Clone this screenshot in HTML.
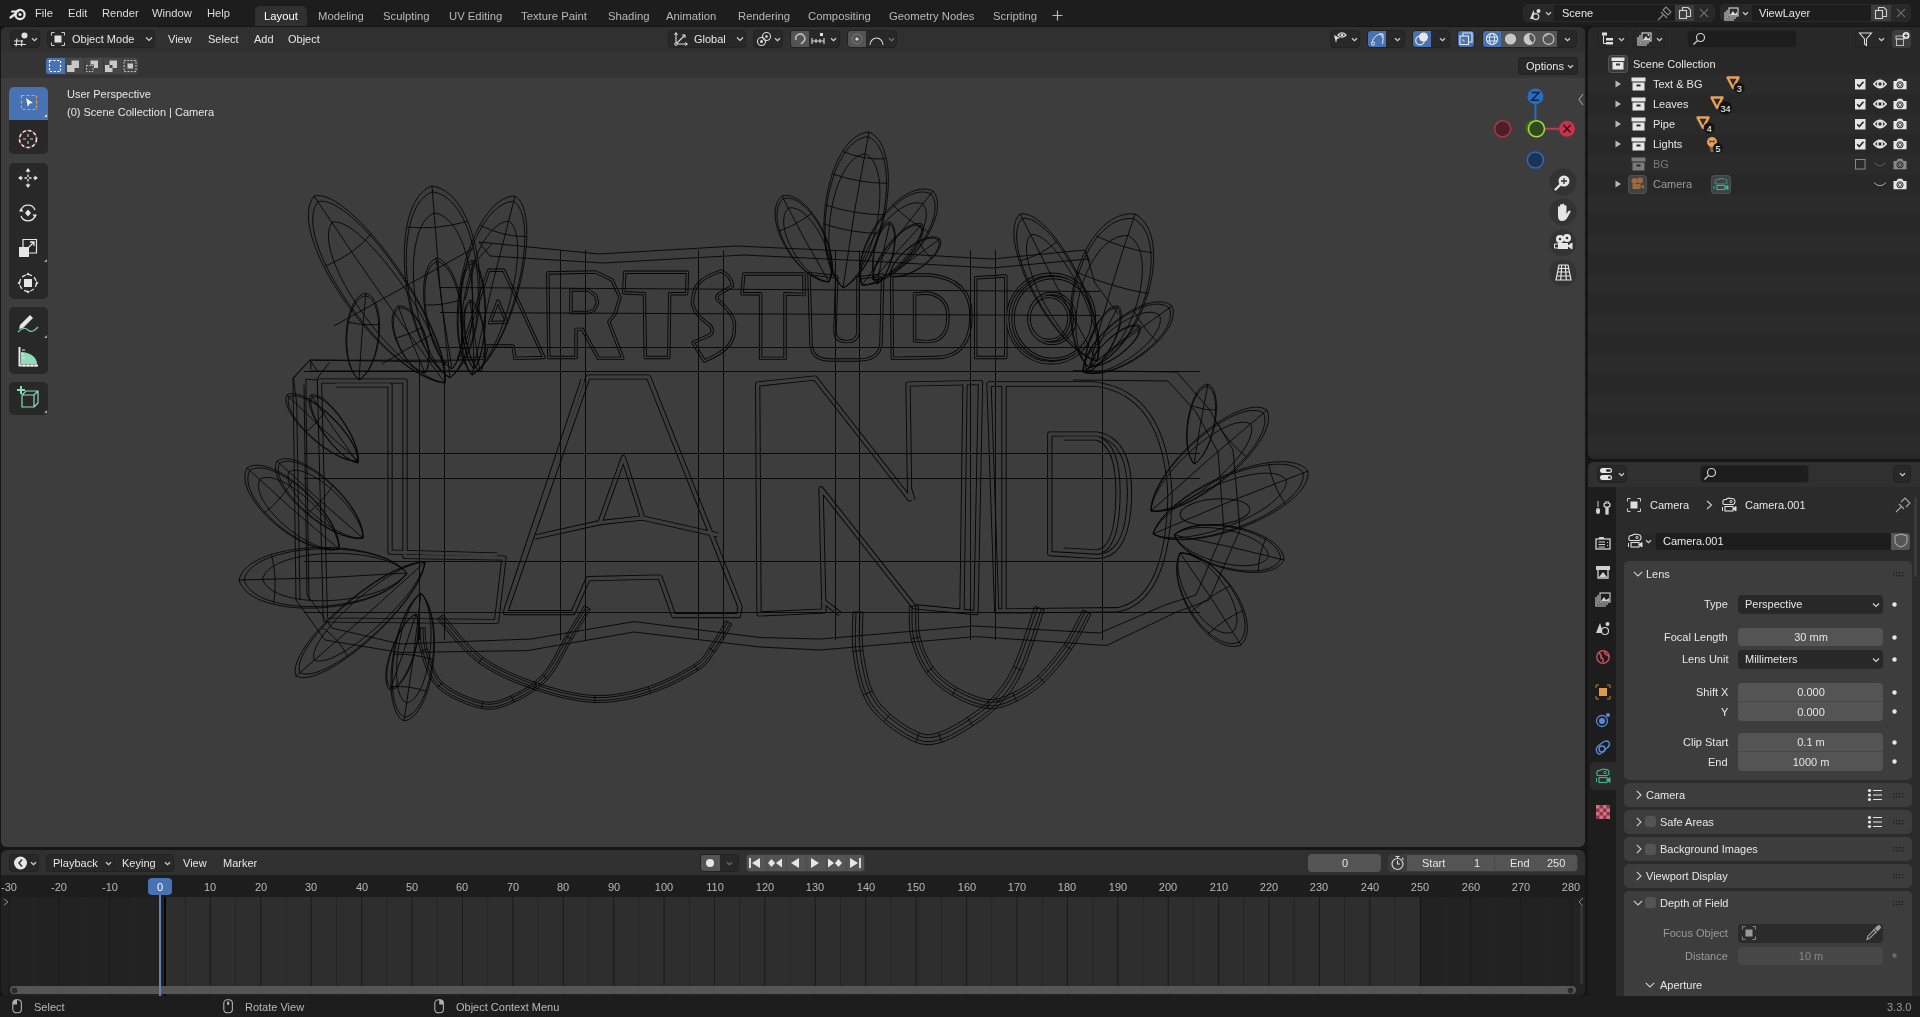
<!DOCTYPE html>
<html><head><meta charset="utf-8">
<style>
*{box-sizing:border-box;margin:0;padding:0}
html,body{width:1920px;height:1017px;overflow:hidden;background:#161616;font-family:"Liberation Sans",sans-serif;font-size:11px;color:#e6e6e6}
.a{position:absolute}
.t{position:absolute;white-space:nowrap;-webkit-font-smoothing:antialiased;will-change:transform}
svg{overflow:visible}
</style></head><body>

<div class="a" style="left:0px;top:0px;width:1920px;height:26px;background:#1d1d1d;border-radius:0px;"></div>
<div class="a" style="left:1px;top:27px;width:1584px;height:820px;background:#3d3d3d;border-radius:6px;"></div>
<div class="a" style="left:1px;top:27px;width:1584px;height:25px;background:#303030;border-radius:0px;border-radius:6px 6px 0 0"></div>
<div class="a" style="left:1px;top:52px;width:1584px;height:26px;background:#343434;border-radius:0px;"></div>
<div class="a" style="left:1588px;top:27px;width:332px;height:432px;background:#282828;border-radius:0px;border-radius:6px 0 0 6px"></div>
<div class="a" style="left:1588px;top:462px;width:332px;height:534px;background:#2b2b2b;border-radius:0px;border-radius:6px 0 0 6px"></div>
<div class="a" style="left:1588px;top:462px;width:332px;height:25px;background:#303030;border-radius:0px;border-radius:6px 0 0 0"></div>
<div class="a" style="left:1588px;top:487px;width:28px;height:509px;background:#1d1d1d;border-radius:0px;border-radius:0 0 0 6px"></div>
<div class="a" style="left:1px;top:850px;width:1584px;height:146px;background:#1d1d1d;border-radius:6px;"></div>
<div class="a" style="left:1px;top:850px;width:1584px;height:25px;background:#303030;border-radius:0px;border-radius:6px 6px 0 0"></div>
<div class="a" style="left:0px;top:996px;width:1920px;height:21px;background:#1d1d1d;border-radius:0px;"></div>
<svg class="a" style="left:0;top:0" width="1586" height="847" viewBox="0 0 1586 847"><g fill="none" stroke="#050505" stroke-width="3.4" stroke-linejoin="round"><path d="M488.8 270.3 L503.8 270.3 L544.0 357.5 L515.0 358.4 L513.0 346.0 L487.0 346.0 L484.0 358.4 L458.8 358.4 Z"/><path d="M498.0 301.0 L506.6 322.0 L489.7 322.8 Z"/><path d="M547.8 273.0 L595.6 272.0 L612.0 280.0 L620.0 297.5 L615.0 314.0 L608.8 322.0 L622.8 358.4 L598.4 358.4 L582.5 329.4 L576.0 329.4 L576.0 357.5 L548.8 357.5 Z"/><path d="M571.0 290.0 L588.0 290.0 L596.0 296.0 L597.5 303.0 L594.0 310.0 L588.0 312.5 L571.0 312.5 Z"/><path d="M624.7 272.2 L687.5 272.2 L686.6 293.8 L669.7 293.8 L668.8 357.5 L645.3 357.5 L644.4 293.8 L623.8 292.8 Z"/><path d="M721 271 C728 274 732 280 732.5 286 L719.4 293.8 C716 296 716 300 719.4 301 C728 310 736 318 734.4 327.5 C735 340 730 350 704.4 361 L693 342.5 L710 335 C714 332 712 326 708 323.8 C700 318 690 308 693 297.5 C694 286 700 278 721 271 Z"/><path d="M743.8 274.0 L804.0 274.0 L804.0 294.6 L785.0 293.8 L785.0 358.4 L760.6 358.4 L760.6 293.8 L742.0 293.8 Z"/><path d="M809 273.4 L836.7 277 L835 331 Q835 341.6 847 341.6 Q858 341.6 858 331 L858 278 L882.7 275 L881 343 Q880 360 858 360 L831 360 Q811 360 811 343 Z"/><path d="M891.6 275 L930.5 275 Q971 280 971 315 Q971 357.5 935.8 357.5 L892.4 358.4 Z M914.6 294 L927 293 Q948 296 948 316.8 Q948 341.6 927 341.6 L914.6 340.7 Z"/><path d="M975.7 277.8 L1005.8 276.0 L1005.8 357.5 L975.7 357.5 Z"/><ellipse cx="1051" cy="318.5" rx="43.4" ry="44.3" transform="rotate(0 1051 318.5)"/><ellipse cx="1049" cy="318.5" rx="20" ry="22" transform="rotate(0 1049 318.5)"/><ellipse cx="1053" cy="318.5" rx="40" ry="41" transform="rotate(0 1053 318.5)"/><ellipse cx="1052" cy="318.5" rx="23" ry="25" transform="rotate(0 1052 318.5)"/></g><g fill="none" stroke="#3d3d3d" stroke-width="1.6" stroke-linejoin="round"><path d="M488.8 270.3 L503.8 270.3 L544.0 357.5 L515.0 358.4 L513.0 346.0 L487.0 346.0 L484.0 358.4 L458.8 358.4 Z"/><path d="M498.0 301.0 L506.6 322.0 L489.7 322.8 Z"/><path d="M547.8 273.0 L595.6 272.0 L612.0 280.0 L620.0 297.5 L615.0 314.0 L608.8 322.0 L622.8 358.4 L598.4 358.4 L582.5 329.4 L576.0 329.4 L576.0 357.5 L548.8 357.5 Z"/><path d="M571.0 290.0 L588.0 290.0 L596.0 296.0 L597.5 303.0 L594.0 310.0 L588.0 312.5 L571.0 312.5 Z"/><path d="M624.7 272.2 L687.5 272.2 L686.6 293.8 L669.7 293.8 L668.8 357.5 L645.3 357.5 L644.4 293.8 L623.8 292.8 Z"/><path d="M721 271 C728 274 732 280 732.5 286 L719.4 293.8 C716 296 716 300 719.4 301 C728 310 736 318 734.4 327.5 C735 340 730 350 704.4 361 L693 342.5 L710 335 C714 332 712 326 708 323.8 C700 318 690 308 693 297.5 C694 286 700 278 721 271 Z"/><path d="M743.8 274.0 L804.0 274.0 L804.0 294.6 L785.0 293.8 L785.0 358.4 L760.6 358.4 L760.6 293.8 L742.0 293.8 Z"/><path d="M809 273.4 L836.7 277 L835 331 Q835 341.6 847 341.6 Q858 341.6 858 331 L858 278 L882.7 275 L881 343 Q880 360 858 360 L831 360 Q811 360 811 343 Z"/><path d="M891.6 275 L930.5 275 Q971 280 971 315 Q971 357.5 935.8 357.5 L892.4 358.4 Z M914.6 294 L927 293 Q948 296 948 316.8 Q948 341.6 927 341.6 L914.6 340.7 Z"/><path d="M975.7 277.8 L1005.8 276.0 L1005.8 357.5 L975.7 357.5 Z"/><ellipse cx="1051" cy="318.5" rx="43.4" ry="44.3" transform="rotate(0 1051 318.5)"/><ellipse cx="1049" cy="318.5" rx="20" ry="22" transform="rotate(0 1049 318.5)"/><ellipse cx="1053" cy="318.5" rx="40" ry="41" transform="rotate(0 1053 318.5)"/><ellipse cx="1052" cy="318.5" rx="23" ry="25" transform="rotate(0 1052 318.5)"/></g><g fill="none" stroke="#050505" stroke-width="5.2" stroke-linejoin="round"><path d="M319.5 381.0 L405.0 381.0 L405.0 556.5 L504.0 558.0 L496.5 621.5 L325.4 620.0 Z"/><path d="M336.0 385.0 L390.0 385.0 L390.0 552.0 L497.0 555.0"/><path d="M588.0 377.0 L648.5 377.0 L740.0 606.7 L738.5 615.6 L673.6 615.6 L660.0 577.0 L588.0 578.7 L573.0 612.6 L505.4 612.6 Z"/><path d="M623.4 457.7 L642.6 518.0 L600.0 522.6 Z"/><path d="M583.0 380.0 L506.0 610.0"/><path d="M600.0 522.6 L535.0 537.0"/><path d="M642.6 518.0 L718.0 535.0"/><path d="M757.7 384.0 L815.0 378.0 L909.7 499.0 L908.0 384.0 L980.5 382.5 L976.0 612.6 L914.0 606.7 L821.0 488.7 L824.0 611.0 L759.0 614.0 Z"/><path d="M910.0 490.0 L913.0 500.0"/><path d="M965.0 384.0 L962.0 610.0"/><path d="M840.0 614.0 L822.0 600.0"/><path d="M989.0 384.0 L1094.0 384.0"/><path d="M989 384 L1094 384 Q1165 392 1170 495 Q1168 600 1117.7 609.7 L996.7 611 Z"/><path d="M1049.8 434 L1097 434 Q1129.5 440 1129.5 491.6 Q1129.5 556 1097 556.5 L1049.8 553.6 Z"/><path d="M1064 438 L1097 438 Q1118 445 1118 491.6 Q1118 550 1097 552 L1064 550"/><path d="M1004.0 384.0 L1004.0 611.0"/></g><g fill="none" stroke="#3d3d3d" stroke-width="3.4" stroke-linejoin="round"><path d="M319.5 381.0 L405.0 381.0 L405.0 556.5 L504.0 558.0 L496.5 621.5 L325.4 620.0 Z"/><path d="M336.0 385.0 L390.0 385.0 L390.0 552.0 L497.0 555.0"/><path d="M588.0 377.0 L648.5 377.0 L740.0 606.7 L738.5 615.6 L673.6 615.6 L660.0 577.0 L588.0 578.7 L573.0 612.6 L505.4 612.6 Z"/><path d="M623.4 457.7 L642.6 518.0 L600.0 522.6 Z"/><path d="M583.0 380.0 L506.0 610.0"/><path d="M600.0 522.6 L535.0 537.0"/><path d="M642.6 518.0 L718.0 535.0"/><path d="M757.7 384.0 L815.0 378.0 L909.7 499.0 L908.0 384.0 L980.5 382.5 L976.0 612.6 L914.0 606.7 L821.0 488.7 L824.0 611.0 L759.0 614.0 Z"/><path d="M910.0 490.0 L913.0 500.0"/><path d="M965.0 384.0 L962.0 610.0"/><path d="M840.0 614.0 L822.0 600.0"/><path d="M989.0 384.0 L1094.0 384.0"/><path d="M989 384 L1094 384 Q1165 392 1170 495 Q1168 600 1117.7 609.7 L996.7 611 Z"/><path d="M1049.8 434 L1097 434 Q1129.5 440 1129.5 491.6 Q1129.5 556 1097 556.5 L1049.8 553.6 Z"/><path d="M1064 438 L1097 438 Q1118 445 1118 491.6 Q1118 550 1097 552 L1064 550"/><path d="M1004.0 384.0 L1004.0 611.0"/></g><g fill="none" stroke="#050505" stroke-width="1" stroke-opacity="0.9"><path d="M314.0 196.0 C283.5 234.1 383.1 376.2 445.0 383.0 C451.2 328.5 351.7 186.3 314.0 196.0"/><path d="M317.9 201.6 C289.1 238.0 385.7 375.9 445.0 383.0 C450.4 330.5 353.9 192.7 317.9 201.6"/><path d="M332.3 222.2 C309.2 252.8 394.8 375.0 445.0 383.0 C448.0 337.8 362.4 215.5 332.3 222.2"/><path d="M314.0 196.0 Q377.1 291.2 445.0 383.0"/><path d="M324.9 266.4 Q354.6 254.0 370.8 234.3"/><path d="M432.0 186.0 C386.5 201.9 400.2 347.8 450.0 378.0 C498.5 338.6 484.9 192.7 432.0 186.0"/><path d="M432.5 191.8 C389.3 207.1 402.6 348.6 450.0 378.0 C496.0 339.9 482.8 198.3 432.5 191.8"/><path d="M434.5 212.9 C399.1 226.2 410.9 351.7 450.0 378.0 C487.6 344.5 475.8 219.0 434.5 212.9"/><path d="M432.0 186.0 Q438.1 282.3 450.0 378.0"/><path d="M407.6 227.0 Q436.1 230.2 466.7 221.5"/><path d="M515.0 196.0 C469.4 196.4 436.8 332.5 472.0 375.0 C512.6 350.7 545.3 214.6 515.0 196.0"/><path d="M513.7 201.4 C470.4 202.0 438.7 333.9 472.0 375.0 C510.7 351.2 542.4 219.3 513.7 201.4"/><path d="M509.0 221.1 C473.2 222.2 445.1 339.2 472.0 375.0 C504.3 353.4 532.4 236.5 509.0 221.1"/><path d="M515.0 196.0 Q490.9 284.9 472.0 375.0"/><path d="M480.6 225.6 Q505.1 237.2 526.1 236.5"/><path d="M366.0 293.0 C343.6 296.4 338.2 362.6 359.0 380.0 C382.3 366.1 387.6 300.0 366.0 293.0"/><path d="M365.8 295.6 C344.5 299.0 339.3 363.1 359.0 380.0 C381.1 366.5 386.3 302.4 365.8 295.6"/><path d="M366.0 293.0 Q361.1 336.4 359.0 380.0"/><path d="M347.8 322.2 Q363.3 326.1 379.3 324.7"/><path d="M398.0 306.0 C381.5 317.3 402.1 368.2 425.0 373.0 C438.2 353.7 417.7 302.7 398.0 306.0"/><path d="M398.8 308.0 C383.2 318.8 403.1 368.2 425.0 373.0 C437.5 354.4 417.6 305.0 398.8 308.0"/><path d="M398.0 306.0 Q410.4 339.9 425.0 373.0"/><path d="M395.5 338.2 Q409.6 334.8 422.1 327.4"/><path d="M436.0 258.0 C412.5 268.2 424.7 352.5 452.0 369.0 C473.6 345.5 461.4 261.1 436.0 258.0"/><path d="M436.5 261.3 C414.2 271.1 426.0 353.0 452.0 369.0 C472.4 346.3 460.6 264.4 436.5 261.3"/><path d="M436.0 258.0 Q442.5 313.7 452.0 369.0"/><path d="M424.4 305.0 Q442.9 305.7 460.4 299.8"/><path d="M472.0 260.0 C455.2 266.9 456.7 349.7 474.0 369.0 C490.5 349.1 489.0 266.2 472.0 260.0"/><path d="M472.1 263.3 C456.1 269.9 457.6 350.3 474.0 369.0 C489.7 349.7 488.2 269.3 472.1 263.3"/><path d="M472.0 260.0 Q472.0 314.5 474.0 369.0"/><path d="M470.0 300.0 C457.7 306.1 465.3 360.8 480.0 372.0 C491.1 357.3 483.5 302.5 470.0 300.0"/><path d="M470.3 302.2 C458.6 308.0 466.0 361.1 480.0 372.0 C490.5 357.7 483.1 304.7 470.3 302.2"/><path d="M470.0 300.0 Q474.2 336.1 480.0 372.0"/><path d="M334.0 326.0 L474.0 248.0"/><path d="M382.0 364.0 L434.0 333.0"/><path d="M869.0 132.0 C826.4 134.5 806.6 253.1 843.0 288.0 C886.1 266.3 905.9 147.8 869.0 132.0"/><path d="M868.2 136.7 C827.7 139.3 808.6 254.3 843.0 288.0 C884.1 266.9 903.3 151.9 868.2 136.7"/><path d="M865.4 153.8 C832.0 156.6 815.0 258.5 843.0 288.0 C877.0 268.9 894.0 166.9 865.4 153.8"/><path d="M869.0 132.0 Q853.5 209.6 843.0 288.0"/><path d="M843.1 151.7 Q864.3 160.1 885.7 158.8"/><path d="M833.0 174.1 Q860.4 183.5 887.6 183.2"/><path d="M825.2 204.9 Q855.2 214.7 884.9 214.8"/><path d="M823.0 223.7 Q852.1 233.4 880.9 233.4"/><path d="M782.0 196.0 C759.7 214.9 795.4 280.2 829.0 282.0 C843.4 254.1 807.6 188.7 782.0 196.0"/><path d="M783.4 198.6 C762.3 216.6 797.0 280.0 829.0 282.0 C842.5 255.1 807.8 191.7 783.4 198.6"/><path d="M788.6 208.0 C771.4 223.2 802.1 279.4 829.0 282.0 C839.5 259.0 808.8 202.8 788.6 208.0"/><path d="M782.0 196.0 Q804.0 239.8 829.0 282.0"/><path d="M778.8 231.2 Q797.5 224.4 811.8 213.2"/><path d="M933.0 191.0 C901.8 176.3 847.8 247.7 862.0 285.0 C899.7 286.9 953.6 215.4 933.0 191.0"/><path d="M930.9 193.8 C901.1 179.9 848.8 249.2 862.0 285.0 C898.0 286.5 950.4 217.2 930.9 193.8"/><path d="M923.1 204.2 C898.4 193.1 852.0 254.6 862.0 285.0 C892.4 285.1 938.8 223.7 923.1 204.2"/><path d="M933.0 191.0 Q895.8 236.7 862.0 285.0"/><path d="M893.2 205.2 Q909.6 222.0 928.8 232.1"/><path d="M922.0 224.0 C907.3 217.1 870.1 259.6 873.0 280.0 C893.6 280.2 930.8 237.6 922.0 224.0"/><path d="M920.5 225.7 C906.5 219.2 870.4 260.5 873.0 280.0 C892.7 280.0 928.8 238.7 920.5 225.7"/><path d="M922.0 224.0 Q896.8 251.4 873.0 280.0"/><path d="M940.0 239.0 C927.7 228.7 889.7 256.8 890.0 276.0 C908.3 281.9 946.3 253.8 940.0 239.0"/><path d="M938.5 240.1 C926.8 230.4 889.9 257.6 890.0 276.0 C907.5 281.5 944.4 254.2 938.5 240.1"/><path d="M940.0 239.0 Q914.4 256.7 890.0 276.0"/><path d="M918.6 241.5 Q923.5 251.2 931.4 258.7"/><path d="M890.0 222.0 C876.5 223.1 866.6 270.2 877.0 284.0 C892.1 275.5 901.9 228.4 890.0 222.0"/><path d="M889.6 223.9 C876.8 224.9 867.2 270.6 877.0 284.0 C891.4 275.7 900.9 230.0 889.6 223.9"/><path d="M890.0 222.0 Q882.7 252.8 877.0 284.0"/><path d="M1020.0 214.0 C994.7 238.5 1053.2 350.2 1097.0 361.0 C1110.8 320.1 1052.3 208.3 1020.0 214.0"/><path d="M1022.3 218.4 C998.3 241.9 1055.1 350.2 1097.0 361.0 C1109.8 321.6 1053.0 213.2 1022.3 218.4"/><path d="M1030.8 234.6 C1011.4 254.4 1061.7 350.5 1097.0 361.0 C1106.6 327.0 1056.3 230.9 1030.8 234.6"/><path d="M1020.0 214.0 Q1056.7 288.5 1097.0 361.0"/><path d="M1019.8 260.9 Q1041.6 255.2 1057.2 241.3"/><path d="M1135.0 214.0 C1082.4 208.4 1047.5 325.4 1089.0 368.0 C1142.1 353.7 1177.1 236.6 1135.0 214.0"/><path d="M1133.6 218.6 C1083.6 213.4 1049.7 327.0 1089.0 368.0 C1139.6 353.8 1173.5 240.3 1133.6 218.6"/><path d="M1128.6 235.6 C1087.3 231.9 1057.3 332.6 1089.0 368.0 C1131.1 354.6 1161.2 254.0 1128.6 235.6"/><path d="M1135.0 214.0 Q1108.9 290.1 1089.0 368.0"/><path d="M1095.9 235.9 Q1124.4 249.4 1152.7 252.8"/><path d="M1077.1 272.2 Q1112.9 287.9 1147.8 293.3"/><path d="M1172.0 306.0 C1149.6 287.0 1082.0 337.1 1083.0 372.0 C1116.1 383.1 1183.7 332.9 1172.0 306.0"/><path d="M1169.3 308.0 C1148.0 290.0 1082.4 338.7 1083.0 372.0 C1114.7 382.3 1180.3 333.6 1169.3 308.0"/><path d="M1159.5 315.2 C1141.7 300.7 1083.5 343.9 1083.0 372.0 C1110.1 379.7 1168.2 336.6 1159.5 315.2"/><path d="M1172.0 306.0 Q1126.5 337.6 1083.0 372.0"/><path d="M1133.6 310.0 Q1142.6 327.8 1157.0 341.6"/><path d="M1140.0 326.0 C1128.8 318.3 1091.6 348.7 1091.0 366.0 C1108.0 368.9 1145.3 338.5 1140.0 326.0"/><path d="M1138.5 327.2 C1127.9 320.0 1091.7 349.4 1091.0 366.0 C1107.4 368.6 1143.5 339.1 1138.5 327.2"/><path d="M1140.0 326.0 Q1115.0 345.4 1091.0 366.0"/><path d="M1118.0 306.0 C1102.0 303.3 1078.5 353.5 1087.0 372.0 C1106.7 366.8 1130.3 316.6 1118.0 306.0"/><path d="M1117.1 308.0 C1101.9 305.5 1079.0 354.2 1087.0 372.0 C1105.8 366.8 1128.7 318.1 1117.1 308.0"/><path d="M1118.0 306.0 Q1101.6 338.6 1087.0 372.0"/><path d="M287.0 395.0 C278.0 413.2 331.9 463.4 358.0 461.0 C358.5 434.8 304.5 384.7 287.0 395.0"/><path d="M289.1 397.0 C280.6 414.4 333.0 463.0 358.0 461.0 C358.2 435.9 305.9 387.3 289.1 397.0"/><path d="M287.0 395.0 Q321.7 428.9 358.0 461.0"/><path d="M305.6 431.9 Q317.5 423.4 325.2 410.9"/><path d="M311.0 395.0 C301.0 407.9 336.7 459.6 358.0 463.0 C362.4 441.9 326.7 390.2 311.0 395.0"/><path d="M312.4 397.0 C303.0 409.4 337.6 459.6 358.0 463.0 C362.0 442.7 327.3 392.6 312.4 397.0"/><path d="M311.0 395.0 Q333.7 429.5 358.0 463.0"/><path d="M247.0 468.0 C231.9 496.3 301.8 557.8 339.0 549.0 C341.3 513.0 271.4 451.4 247.0 468.0"/><path d="M249.8 470.4 C235.5 497.4 303.4 557.1 339.0 549.0 C340.9 514.5 273.1 454.8 249.8 470.4"/><path d="M259.9 479.3 C248.5 501.8 308.7 554.7 339.0 549.0 C339.5 519.7 279.4 466.8 259.9 479.3"/><path d="M247.0 468.0 Q291.7 509.9 339.0 549.0"/><path d="M264.4 513.1 Q282.0 498.8 292.7 481.0"/><path d="M277.0 461.0 C264.8 485.0 330.2 543.5 363.0 538.0 C364.9 504.8 299.5 446.2 277.0 461.0"/><path d="M279.6 463.3 C268.1 486.2 331.5 543.0 363.0 538.0 C364.5 506.2 301.1 449.4 279.6 463.3"/><path d="M289.0 471.8 C279.9 490.9 336.2 541.2 363.0 538.0 C363.2 511.0 307.0 460.6 289.0 471.8"/><path d="M277.0 461.0 Q318.9 500.7 363.0 538.0"/><path d="M307.0 514.0 Q322.6 501.8 333.0 485.0"/><path d="M239.0 580.0 C250.8 621.1 378.5 615.8 407.0 573.0 C375.1 535.3 247.5 540.6 239.0 580.0"/><path d="M244.0 579.8 C255.5 618.9 379.3 613.7 407.0 573.0 C376.1 537.2 252.3 542.4 244.0 579.8"/><path d="M262.5 579.0 C272.5 611.1 382.3 606.5 407.0 573.0 C379.7 543.7 269.9 548.3 262.5 579.0"/><path d="M239.0 580.0 Q323.1 579.1 407.0 573.0"/><path d="M273.6 603.5 Q277.6 578.4 271.6 555.2"/><path d="M296.0 676.0 C322.7 690.6 420.7 604.0 425.0 562.0 C382.8 561.1 284.8 647.7 296.0 676.0"/><path d="M299.9 672.6 C325.4 686.3 420.5 602.3 425.0 562.0 C384.5 561.5 289.4 645.6 299.9 672.6"/><path d="M314.1 660.0 C335.5 670.9 419.8 596.4 425.0 562.0 C390.3 562.9 305.9 637.4 314.1 660.0"/><path d="M296.0 676.0 Q361.7 620.3 425.0 562.0"/><path d="M347.7 656.5 Q338.6 638.4 321.7 627.1"/><path d="M404.0 721.0 C433.4 717.1 446.3 619.8 421.0 593.0 C392.2 612.6 379.2 709.9 404.0 721.0"/><path d="M404.5 717.2 C432.4 713.3 445.0 618.9 421.0 593.0 C393.5 612.1 381.0 706.5 404.5 717.2"/><path d="M406.4 703.1 C429.4 699.4 440.5 615.8 421.0 593.0 C398.3 610.1 387.2 693.8 406.4 703.1"/><path d="M404.0 721.0 Q414.2 657.2 421.0 593.0"/><path d="M426.7 691.4 Q408.8 685.2 391.5 686.8"/><path d="M433.8 659.8 Q413.0 653.2 393.2 654.4"/><path d="M390.0 690.0 C406.3 690.5 426.1 632.7 416.0 614.0 C396.6 622.6 376.8 680.4 390.0 690.0"/><path d="M390.8 687.7 C406.3 688.1 425.5 632.1 416.0 614.0 C397.4 622.5 378.3 678.5 390.8 687.7"/><path d="M390.0 690.0 Q403.9 652.3 416.0 614.0"/><path d="M1208.0 384.0 C1189.2 385.7 1178.6 446.5 1194.0 464.0 C1214.4 452.7 1225.1 391.9 1208.0 384.0"/><path d="M1207.6 386.4 C1189.7 388.1 1179.4 447.1 1194.0 464.0 C1213.5 453.0 1223.8 394.0 1207.6 386.4"/><path d="M1208.0 384.0 Q1199.9 423.8 1194.0 464.0"/><path d="M1191.5 405.8 Q1203.4 410.4 1216.1 410.2"/><path d="M1267.0 410.0 C1238.7 391.5 1150.5 468.3 1151.0 511.0 C1193.2 517.3 1281.4 440.6 1267.0 410.0"/><path d="M1263.5 413.0 C1236.5 395.6 1151.0 470.1 1151.0 511.0 C1191.5 516.7 1277.0 442.2 1263.5 413.0"/><path d="M1250.8 424.1 C1228.1 410.2 1152.3 476.2 1151.0 511.0 C1185.6 514.5 1261.4 448.5 1250.8 424.1"/><path d="M1267.0 410.0 Q1207.7 459.0 1151.0 511.0"/><path d="M1217.5 423.5 Q1228.7 443.3 1246.9 457.1"/><path d="M1308.0 471.0 C1285.0 441.1 1167.2 488.9 1153.0 534.0 C1194.6 556.4 1312.4 508.5 1308.0 471.0"/><path d="M1303.3 472.9 C1281.3 444.5 1167.0 491.0 1153.0 534.0 C1193.1 555.0 1307.3 508.6 1303.3 472.9"/><path d="M1286.3 479.8 C1267.6 456.8 1166.3 497.9 1153.0 534.0 C1187.7 550.5 1289.0 509.4 1286.3 479.8"/><path d="M1308.0 471.0 Q1229.7 500.4 1153.0 534.0"/><path d="M1268.8 463.4 Q1272.3 485.5 1285.2 503.8"/><ellipse cx="1215" cy="512" rx="35" ry="13" transform="rotate(-5 1215 512)"/><path d="M1284.0 560.0 C1283.7 530.6 1200.1 511.6 1174.0 535.0 C1187.5 567.4 1271.1 586.4 1284.0 560.0"/><path d="M1280.7 559.2 C1280.3 531.3 1199.2 512.9 1174.0 535.0 C1187.2 565.9 1268.3 584.3 1280.7 559.2"/><path d="M1268.6 556.5 C1267.9 533.5 1196.0 517.1 1174.0 535.0 C1186.1 560.6 1258.0 577.0 1268.6 556.5"/><path d="M1284.0 560.0 Q1229.4 545.8 1174.0 535.0"/><path d="M1265.8 538.3 Q1258.7 554.2 1258.2 571.7"/><path d="M1241.0 645.0 C1264.4 621.5 1218.1 551.6 1180.0 553.0 C1163.9 587.5 1210.3 657.4 1241.0 645.0"/><path d="M1239.2 642.2 C1261.4 619.8 1216.4 552.0 1180.0 553.0 C1164.9 586.1 1209.9 653.9 1239.2 642.2"/><path d="M1232.5 632.1 C1250.4 613.4 1210.6 553.2 1180.0 553.0 C1168.3 581.3 1208.2 641.4 1232.5 632.1"/><path d="M1241.0 645.0 Q1212.2 597.9 1180.0 553.0"/><path d="M1243.3 610.3 Q1223.9 619.2 1208.2 633.7"/><path d="M1230.8 585.5 Q1208.7 596.2 1190.2 612.5"/><path d="M479.0 242.0 L599.0 254.0 L736.0 246.0 L868.0 252.0 L992.0 259.0 L1085.0 250.0"/><path d="M490.0 256.0 L603.0 263.0 L744.0 255.0 L868.0 261.0 L992.0 268.0 L1088.0 259.0"/><path d="M479.0 242.0 L490.0 256.0"/><path d="M1085.0 250.0 L1095.0 283.0 L1118.0 314.0"/><path d="M1085.0 250.0 L1090.0 262.0"/><path d="M492.0 244.0 L475.0 262.0 L465.0 300.0"/><path d="M293.0 378.0 L310.0 360.0 L449.0 362.0"/><path d="M310.0 360.0 L318.0 372.0"/><path d="M293.5 378.4 L309.7 360.2 L480.0 360.2"/><path d="M310.7 361.8 L310.7 369.6"/><path d="M329.5 362.3 L316.0 380.0"/><path d="M305.5 379.0 L316.0 380.0"/><path d="M310.7 371.0 L480.0 371.0"/><path d="M293.5 378.4 L296.7 403.0 L300.0 600.0"/><path d="M306.0 379.0 L306.0 403.0 L309.0 600.0"/><path d="M317.5 380.0 L317.5 394.6"/><path d="M1073.0 370.6 L1176.7 372.0 L1209.0 409.0 L1233.0 450.0 L1240.0 530.0 L1209.0 600.0 L1176.7 612.0 L1106.7 645.5 L975.8 636.6 L820.0 650.0 L760.0 647.0 L634.0 632.0 L527.5 650.6 L400.0 652.5 L325.0 640.0 L296.0 600.0 L293.0 378.0"/><path d="M1073.0 380.0 L1168.0 381.0 L1196.0 412.0 L1218.0 452.0 L1224.0 530.0 L1196.0 595.0 L1165.0 605.0 L1099.6 633.0 L974.0 626.0 L820.0 639.0 L760.0 637.5 L634.0 621.6 L531.0 639.0 L400.0 644.0 L332.0 628.0 L307.0 595.0 L304.0 385.0"/><path d="M304.0 371.5 L1200.0 371.5"/><path d="M304.0 453.5 L1200.0 453.5"/><path d="M304.0 478.5 L1200.0 478.5"/><path d="M304.0 561.5 L1200.0 561.5"/><path d="M304.0 612.5 L1200.0 612.5"/><path d="M440.0 287.5 L1100.0 291.5"/><path d="M440.0 312.5 L1100.0 315.5"/><path d="M440.0 347.5 L1100.0 347.5"/><path d="M419.5 362.0 L419.5 640.0"/><path d="M444.5 362.0 L444.5 640.0"/><path d="M560.5 250.0 L560.5 640.0"/><path d="M585.5 250.0 L585.5 640.0"/><path d="M698.5 250.0 L698.5 640.0"/><path d="M723.5 250.0 L723.5 640.0"/><path d="M835.5 250.0 L835.5 640.0"/><path d="M859.5 250.0 L859.5 640.0"/><path d="M970.5 250.0 L970.5 640.0"/><path d="M995.5 250.0 L995.5 640.0"/><path d="M1102.5 362.0 L1102.5 640.0"/><path d="M425.1 627.8 L425.2 630.2 L425.2 633.2 L425.3 636.6 L425.6 640.5 L426.2 644.6 L427.4 649.1 L428.9 654.3 L430.7 660.2 L432.8 666.4 L435.4 672.4 L438.5 677.9 L442.4 682.5 L447.6 686.6 L454.2 690.7 L461.6 694.4 L469.1 697.5 L476.4 700.0 L482.7 701.6 L487.9 702.2 L492.6 702.0 L497.0 701.2 L501.4 699.8 L506.1 698.0 L511.0 695.8 L516.3 693.3 L521.8 690.5 L527.3 687.2 L532.6 683.4 L537.7 679.3 L542.4 674.7 L546.7 669.3 L550.8 662.9 L554.8 656.0 L558.6 649.0 L562.4 642.0 L566.0 635.7 L569.6 629.8 L573.3 623.8 L576.8 618.2 L579.9 613.1 L582.6 608.8 L584.5 605.7"/><path d="M423.0 627.9 L423.1 630.2 L423.1 633.2 L423.2 636.7 L423.5 640.7 L424.2 645.0 L425.3 649.6 L426.9 654.9 L428.7 660.8 L430.8 667.1 L433.5 673.3 L436.8 679.1 L441.0 684.0 L446.4 688.4 L453.2 692.5 L460.7 696.3 L468.4 699.5 L475.8 702.0 L482.3 703.6 L487.8 704.3 L492.8 704.1 L497.5 703.3 L502.1 701.8 L506.9 699.9 L511.9 697.7 L517.3 695.2 L522.8 692.3 L528.4 688.9 L533.9 685.1 L539.1 680.8 L544.0 676.1 L548.4 670.5 L552.6 664.0 L556.7 657.1 L560.5 649.9 L564.2 643.1 L567.8 636.8 L571.4 630.9 L575.1 625.0 L578.6 619.3 L581.7 614.2 L584.4 609.9 L586.3 606.8"/><path d="M420.2 628.1 L420.3 630.3 L420.3 633.2 L420.4 636.9 L420.7 641.0 L421.4 645.6 L422.7 650.4 L424.2 655.7 L426.0 661.7 L428.2 668.1 L431.0 674.6 L434.5 680.7 L439.0 686.0 L444.8 690.6 L451.8 695.0 L459.5 698.8 L467.4 702.1 L475.0 704.7 L481.7 706.4 L487.7 707.1 L493.1 706.9 L498.2 706.0 L503.1 704.5 L508.0 702.5 L513.1 700.3 L518.5 697.7 L524.2 694.7 L529.9 691.3 L535.6 687.3 L541.0 682.9 L546.0 677.9 L550.7 672.1 L555.0 665.5 L559.1 658.4 L563.0 651.3 L566.6 644.4 L570.2 638.2 L573.8 632.3 L577.5 626.4 L580.9 620.8 L584.1 615.7 L586.7 611.4 L588.7 608.2"/><path d="M418.1 628.2 L418.2 630.3 L418.2 633.3 L418.3 637.0 L418.6 641.3 L419.4 646.0 L420.6 650.9 L422.2 656.3 L424.0 662.3 L426.3 668.9 L429.1 675.5 L432.8 681.9 L437.6 687.5 L443.6 692.4 L450.8 696.8 L458.6 700.7 L466.6 704.1 L474.4 706.7 L481.3 708.4 L487.6 709.2 L493.3 709.0 L498.7 708.0 L503.8 706.4 L508.8 704.5 L514.0 702.2 L519.5 699.6 L525.2 696.5 L531.1 693.0 L536.8 689.0 L542.4 684.5 L547.6 679.3 L552.4 673.4 L556.8 666.6 L560.9 659.5 L564.8 652.3 L568.5 645.4 L572.0 639.3 L575.6 633.4 L579.2 627.5 L582.7 621.9 L585.9 616.8 L588.5 612.5 L590.5 609.3"/><path d="M425.1 627.8 L418.1 628.2"/><path d="M427.4 649.1 L420.6 650.9"/><path d="M442.4 682.5 L437.6 687.5"/><path d="M482.7 701.6 L481.3 708.4"/><path d="M511.0 695.8 L514.0 702.2"/><path d="M542.4 674.7 L547.6 679.3"/><path d="M566.0 635.7 L572.0 639.3"/><path d="M584.5 605.7 L590.5 609.3"/><path d="M442.6 614.7 L446.9 619.6 L452.7 626.5 L459.5 634.6 L467.1 642.9 L474.9 650.7 L482.7 657.2 L490.6 662.5 L499.1 667.3 L508.1 671.7 L517.3 675.7 L526.7 679.3 L536.1 682.7 L545.8 685.8 L555.7 688.7 L565.8 691.3 L575.8 693.3 L585.6 694.8 L595.1 695.5 L604.3 695.4 L613.4 694.7 L622.4 693.3 L631.3 691.4 L639.9 689.2 L648.3 686.7 L656.7 683.7 L665.2 680.1 L673.5 676.2 L681.3 672.1 L688.3 668.1 L694.1 664.6 L698.3 661.6 L701.1 659.2 L703.1 656.9 L704.8 654.4 L706.7 651.5 L709.1 648.0 L712.0 643.8 L715.2 638.7 L718.5 633.4 L721.5 628.2 L724.1 623.8 L726.0 620.7"/><path d="M441.1 616.1 L445.3 621.0 L451.1 627.9 L458.0 636.0 L465.6 644.4 L473.5 652.3 L481.4 658.9 L489.5 664.3 L498.2 669.2 L507.2 673.6 L516.5 677.6 L525.9 681.3 L535.5 684.7 L545.2 687.8 L555.2 690.8 L565.3 693.3 L575.5 695.4 L585.4 696.9 L595.0 697.6 L604.4 697.5 L613.7 696.7 L622.8 695.3 L631.7 693.5 L640.5 691.2 L649.0 688.7 L657.5 685.7 L666.1 682.0 L674.5 678.0 L682.4 673.9 L689.4 669.9 L695.2 666.3 L699.6 663.3 L702.6 660.7 L704.8 658.2 L706.6 655.6 L708.5 652.7 L710.8 649.2 L713.8 644.9 L717.0 639.8 L720.3 634.4 L723.4 629.3 L725.9 624.9 L727.8 621.8"/><path d="M438.9 617.9 L443.2 622.8 L448.9 629.7 L455.8 637.8 L463.5 646.3 L471.6 654.4 L479.8 661.1 L488.1 666.7 L496.8 671.6 L506.0 676.1 L515.4 680.2 L525.0 683.9 L534.5 687.3 L544.3 690.5 L554.4 693.5 L564.7 696.1 L575.0 698.2 L585.1 699.6 L595.0 700.4 L604.5 700.3 L614.0 699.5 L623.3 698.1 L632.4 696.2 L641.2 693.9 L649.8 691.3 L658.5 688.3 L667.2 684.6 L675.7 680.5 L683.7 676.4 L690.8 672.3 L696.8 668.7 L701.3 665.5 L704.5 662.7 L706.9 659.9 L708.9 657.2 L710.8 654.2 L713.2 650.8 L716.1 646.4 L719.4 641.3 L722.7 635.9 L725.8 630.7 L728.3 626.3 L730.2 623.2"/><path d="M437.4 619.3 L441.6 624.1 L447.3 631.0 L454.3 639.2 L462.0 647.7 L470.2 655.9 L478.5 662.8 L487.0 668.4 L495.9 673.5 L505.1 678.1 L514.6 682.2 L524.2 685.9 L533.9 689.3 L543.7 692.5 L553.9 695.5 L564.2 698.1 L574.6 700.2 L584.9 701.7 L594.9 702.5 L604.6 702.4 L614.3 701.6 L623.7 700.2 L632.9 698.2 L641.8 695.9 L650.5 693.3 L659.2 690.2 L668.1 686.5 L676.7 682.4 L684.7 678.2 L691.9 674.1 L697.9 670.4 L702.6 667.2 L706.0 664.2 L708.6 661.2 L710.6 658.3 L712.5 655.4 L714.9 652.0 L717.9 647.6 L721.2 642.4 L724.5 637.0 L727.6 631.8 L730.1 627.4 L732.0 624.3"/><path d="M442.6 614.7 L437.4 619.3"/><path d="M482.7 657.2 L478.5 662.8"/><path d="M536.1 682.7 L533.9 689.3"/><path d="M595.1 695.5 L594.9 702.5"/><path d="M648.3 686.7 L650.5 693.3"/><path d="M694.1 664.6 L697.9 670.4"/><path d="M709.1 648.0 L714.9 652.0"/><path d="M726.0 620.7 L732.0 624.3"/><path d="M863.0 612.1 L862.9 616.4 L862.6 622.2 L862.4 629.0 L862.3 636.3 L862.4 643.6 L863.0 650.5 L863.9 657.3 L865.1 664.5 L866.6 671.8 L868.3 678.8 L870.2 685.4 L872.4 691.0 L874.7 695.8 L877.3 700.0 L880.0 703.8 L883.1 707.3 L886.5 710.7 L890.3 714.2 L894.6 717.9 L899.5 721.6 L904.7 725.1 L909.8 728.3 L914.8 730.9 L919.1 732.8 L922.7 734.0 L925.8 734.6 L928.6 734.7 L931.4 734.5 L934.7 733.8 L938.5 732.7 L942.7 731.2 L947.4 729.1 L952.3 726.5 L957.4 723.6 L962.4 720.5 L967.3 717.4 L971.9 714.3 L976.5 711.1 L981.0 707.8 L985.3 704.3 L989.4 700.6 L993.3 696.6 L997.0 692.4 L1000.5 688.2 L1003.7 683.8 L1006.9 678.9 L1010.1 673.2 L1013.4 666.4 L1017.1 657.6 L1021.2 646.6 L1025.3 634.7 L1029.2 623.2 L1032.4 613.3 L1034.8 606.4"/><path d="M860.0 612.1 L859.9 616.3 L859.6 622.1 L859.4 628.9 L859.3 636.3 L859.4 643.8 L860.0 650.8 L860.9 657.7 L862.2 665.0 L863.7 672.4 L865.4 679.6 L867.4 686.3 L869.6 692.2 L872.1 697.3 L874.8 701.7 L877.7 705.7 L880.9 709.3 L884.4 712.9 L888.3 716.5 L892.7 720.2 L897.7 724.0 L903.0 727.6 L908.4 730.9 L913.4 733.6 L918.0 735.6 L921.9 736.9 L925.4 737.5 L928.6 737.7 L931.9 737.4 L935.4 736.7 L939.4 735.6 L943.9 734.0 L948.7 731.8 L953.8 729.1 L958.9 726.2 L964.0 723.1 L968.9 719.9 L973.6 716.8 L978.3 713.6 L982.8 710.2 L987.3 706.6 L991.5 702.8 L995.5 698.6 L999.3 694.4 L1002.8 690.1 L1006.2 685.5 L1009.5 680.5 L1012.8 674.6 L1016.2 667.7 L1019.9 658.7 L1024.0 647.6 L1028.2 635.6 L1032.0 624.1 L1035.3 614.3 L1037.6 607.4"/><path d="M856.0 611.9 L855.9 616.1 L855.6 621.9 L855.4 628.8 L855.3 636.3 L855.4 644.0 L856.0 651.2 L857.0 658.3 L858.2 665.8 L859.7 673.3 L861.5 680.7 L863.6 687.6 L866.0 693.8 L868.6 699.2 L871.4 703.9 L874.6 708.2 L878.0 712.1 L881.7 715.8 L885.7 719.5 L890.2 723.4 L895.4 727.3 L900.8 731.0 L906.4 734.4 L911.7 737.2 L916.6 739.4 L920.9 740.7 L924.9 741.5 L928.7 741.7 L932.5 741.4 L936.4 740.6 L940.6 739.4 L945.4 737.7 L950.4 735.4 L955.7 732.7 L961.0 729.6 L966.2 726.5 L971.1 723.3 L975.9 720.1 L980.6 716.8 L985.3 713.4 L989.9 709.7 L994.3 705.7 L998.5 701.4 L1002.4 697.0 L1006.0 692.5 L1009.5 687.8 L1012.9 682.5 L1016.3 676.5 L1019.8 669.3 L1023.7 660.1 L1027.8 648.9 L1032.0 636.9 L1035.8 625.4 L1039.1 615.6 L1041.4 608.6"/><path d="M853.0 611.9 L852.9 616.0 L852.6 621.8 L852.4 628.7 L852.3 636.3 L852.4 644.1 L853.0 651.5 L854.0 658.8 L855.3 666.3 L856.8 674.0 L858.6 681.5 L860.8 688.5 L863.2 695.0 L865.9 700.6 L868.9 705.6 L872.2 710.0 L875.8 714.1 L879.6 717.9 L883.7 721.8 L888.4 725.7 L893.6 729.7 L899.2 733.5 L904.9 737.0 L910.4 739.9 L915.5 742.2 L920.2 743.7 L924.5 744.5 L928.8 744.7 L932.9 744.3 L937.1 743.5 L941.5 742.3 L946.5 740.5 L951.8 738.1 L957.1 735.3 L962.5 732.2 L967.7 729.0 L972.7 725.8 L977.6 722.6 L982.4 719.3 L987.1 715.7 L991.8 711.9 L996.4 707.8 L1000.7 703.4 L1004.6 698.9 L1008.4 694.4 L1012.0 689.5 L1015.5 684.1 L1019.0 677.9 L1022.6 670.6 L1026.5 661.2 L1030.6 649.9 L1034.8 637.9 L1038.7 626.3 L1041.9 616.5 L1044.2 609.6"/><path d="M863.0 612.1 L853.0 611.9"/><path d="M863.0 650.5 L853.0 651.5"/><path d="M872.4 691.0 L863.2 695.0"/><path d="M890.3 714.2 L883.7 721.8"/><path d="M919.1 732.8 L915.5 742.2"/><path d="M938.5 732.7 L941.5 742.3"/><path d="M967.3 717.4 L972.7 725.8"/><path d="M993.3 696.6 L1000.7 703.4"/><path d="M1013.4 666.4 L1022.6 670.6"/><path d="M1034.8 606.4 L1044.2 609.6"/><path d="M918.3 605.9 L918.4 609.5 L918.3 614.3 L918.3 619.9 L918.5 625.9 L919.0 631.7 L920.0 637.0 L921.4 642.1 L923.2 647.5 L925.3 652.9 L927.8 658.1 L930.4 663.0 L933.3 667.4 L936.5 671.4 L940.0 675.1 L943.8 678.5 L947.9 681.8 L952.2 684.8 L956.8 687.6 L961.7 690.3 L967.1 693.0 L972.8 695.3 L978.4 697.3 L983.7 698.8 L988.4 699.5 L992.6 699.6 L996.6 699.1 L1000.5 698.1 L1004.4 696.7 L1008.5 694.9 L1012.7 692.9 L1017.0 690.8 L1021.2 688.5 L1025.3 685.8 L1029.5 682.9 L1033.7 679.5 L1037.9 675.7 L1042.3 671.4 L1046.8 666.5 L1051.4 661.2 L1055.9 655.6 L1060.1 650.0 L1064.1 644.5 L1067.8 638.6 L1071.5 632.1 L1075.1 625.4 L1078.3 619.1 L1081.0 613.8 L1083.0 609.9"/><path d="M915.6 606.0 L915.7 609.5 L915.6 614.3 L915.6 620.0 L915.8 626.0 L916.4 632.1 L917.4 637.6 L918.8 642.9 L920.7 648.4 L922.9 653.9 L925.4 659.3 L928.1 664.3 L931.2 668.9 L934.5 673.1 L938.1 677.0 L942.1 680.6 L946.3 683.9 L950.7 687.1 L955.4 689.9 L960.5 692.7 L966.0 695.4 L971.8 697.9 L977.6 699.9 L983.1 701.4 L988.2 702.2 L992.8 702.3 L997.1 701.7 L1001.3 700.7 L1005.4 699.2 L1009.6 697.4 L1013.9 695.4 L1018.3 693.2 L1022.6 690.8 L1026.8 688.1 L1031.1 685.0 L1035.4 681.6 L1039.8 677.7 L1044.2 673.3 L1048.8 668.3 L1053.5 662.9 L1058.0 657.3 L1062.3 651.6 L1066.3 646.0 L1070.1 640.0 L1073.9 633.4 L1077.5 626.7 L1080.7 620.4 L1083.4 615.0 L1085.4 611.2"/><path d="M912.0 606.0 L912.1 609.5 L912.0 614.3 L912.0 620.0 L912.2 626.3 L912.8 632.5 L913.8 638.4 L915.4 644.0 L917.3 649.7 L919.6 655.4 L922.1 660.9 L925.0 666.2 L928.2 671.1 L931.8 675.5 L935.6 679.6 L939.7 683.3 L944.1 686.8 L948.8 690.1 L953.6 693.1 L958.8 695.9 L964.5 698.7 L970.5 701.2 L976.5 703.3 L982.3 704.9 L987.8 705.8 L992.9 705.9 L997.8 705.3 L1002.3 704.1 L1006.7 702.5 L1011.1 700.7 L1015.5 698.6 L1019.9 696.4 L1024.4 693.9 L1028.9 691.1 L1033.3 687.9 L1037.8 684.3 L1042.2 680.3 L1046.8 675.8 L1051.5 670.7 L1056.2 665.2 L1060.8 659.5 L1065.2 653.7 L1069.3 648.0 L1073.2 641.9 L1077.1 635.1 L1080.7 628.3 L1083.9 622.0 L1086.6 616.7 L1088.6 612.8"/><path d="M909.3 606.1 L909.4 609.5 L909.3 614.3 L909.3 620.1 L909.5 626.4 L910.1 632.9 L911.2 639.0 L912.8 644.8 L914.8 650.6 L917.1 656.4 L919.7 662.1 L922.7 667.6 L926.1 672.6 L929.7 677.2 L933.7 681.5 L938.0 685.4 L942.5 689.0 L947.3 692.3 L952.2 695.4 L957.6 698.3 L963.4 701.2 L969.5 703.7 L975.7 705.9 L981.8 707.5 L987.6 708.5 L993.1 708.6 L998.2 707.9 L1003.1 706.7 L1007.7 705.1 L1012.2 703.1 L1016.7 701.1 L1021.2 698.8 L1025.8 696.2 L1030.4 693.3 L1034.9 690.0 L1039.5 686.4 L1044.1 682.3 L1048.8 677.6 L1053.5 672.5 L1058.3 666.9 L1063.0 661.2 L1067.4 655.3 L1071.5 649.5 L1075.5 643.3 L1079.4 636.4 L1083.1 629.6 L1086.3 623.2 L1089.0 617.9 L1091.0 614.1"/><path d="M918.3 605.9 L909.3 606.1"/><path d="M920.0 637.0 L911.2 639.0"/><path d="M933.3 667.4 L926.1 672.6"/><path d="M956.8 687.6 L952.2 695.4"/><path d="M988.4 699.5 L987.6 708.5"/><path d="M1012.7 692.9 L1016.7 701.1"/><path d="M1037.9 675.7 L1044.1 682.3"/><path d="M1064.1 644.5 L1071.5 649.5"/><path d="M1083.0 609.9 L1091.0 614.1"/></g></svg>
<svg class="a" style="left:9px;top:5px;" width="18" height="16" viewBox="0 0 18 16"><circle cx="11" cy="9.5" r="4.6" fill="none" stroke="#e6e6e6" stroke-width="2.2"/><circle cx="11" cy="9.5" r="1.6" fill="#e6e6e6"/><path d="M1.5 12.5 L7 8.5 M3 6.5 L9 6.5" stroke="#e6e6e6" stroke-width="2.2" stroke-linecap="round"/></svg>
<div class="t" style="left:35px;top:7.9px;font-size:11.2px;line-height:11.2px;color:#dcdcdc;">File</div>
<div class="t" style="left:68px;top:7.9px;font-size:11.2px;line-height:11.2px;color:#dcdcdc;">Edit</div>
<div class="t" style="left:102px;top:7.9px;font-size:11.2px;line-height:11.2px;color:#dcdcdc;">Render</div>
<div class="t" style="left:152px;top:7.9px;font-size:11.2px;line-height:11.2px;color:#dcdcdc;">Window</div>
<div class="t" style="left:207px;top:7.9px;font-size:11.2px;line-height:11.2px;color:#dcdcdc;">Help</div>
<div class="a" style="left:255px;top:6px;width:52px;height:20px;background:#303030;border-radius:0px;border-radius:5px 5px 0 0"></div>
<div class="t" style="left:264px;top:10.85px;font-size:11.3px;line-height:11.3px;color:#ffffff;">Layout</div>
<div class="t" style="left:318px;top:10.85px;font-size:11.3px;line-height:11.3px;color:#b8b8b8;">Modeling</div>
<div class="t" style="left:383px;top:10.85px;font-size:11.3px;line-height:11.3px;color:#b8b8b8;">Sculpting</div>
<div class="t" style="left:449px;top:10.85px;font-size:11.3px;line-height:11.3px;color:#b8b8b8;">UV Editing</div>
<div class="t" style="left:521px;top:10.85px;font-size:11.3px;line-height:11.3px;color:#b8b8b8;">Texture Paint</div>
<div class="t" style="left:607.5px;top:10.85px;font-size:11.3px;line-height:11.3px;color:#b8b8b8;">Shading</div>
<div class="t" style="left:666px;top:10.85px;font-size:11.3px;line-height:11.3px;color:#b8b8b8;">Animation</div>
<div class="t" style="left:737.5px;top:10.85px;font-size:11.3px;line-height:11.3px;color:#b8b8b8;">Rendering</div>
<div class="t" style="left:807.5px;top:10.85px;font-size:11.3px;line-height:11.3px;color:#b8b8b8;">Compositing</div>
<div class="t" style="left:889px;top:10.85px;font-size:11.3px;line-height:11.3px;color:#b8b8b8;">Geometry Nodes</div>
<div class="t" style="left:993px;top:10.85px;font-size:11.3px;line-height:11.3px;color:#b8b8b8;">Scripting</div>
<svg class="a" style="left:1052px;top:10px;" width="11" height="11" viewBox="0 0 11 11"><path d="M5.5 0.5 V10.5 M0.5 5.5 H10.5" stroke="#b8b8b8" stroke-width="1.2"/></svg>
<div class="a" style="left:1523px;top:4px;width:192px;height:18px;background:#1d1d1d;border-radius:4px;border:1px solid #2a2a2a"></div>
<div class="a" style="left:1524px;top:5px;width:30px;height:16px;background:#282828;border-radius:0px;border-radius:3px 0 0 3px"></div>
<div class="a" style="left:1554px;top:5px;width:121px;height:16px;background:#1d1d1d;border-radius:0px;"></div>
<div class="a" style="left:1675px;top:5px;width:19px;height:16px;background:#3d3d3d;border-radius:0px;"></div>
<div class="a" style="left:1694px;top:5px;width:20px;height:16px;background:#282828;border-radius:0px;border-radius:0 3px 3px 0"></div>
<svg class="a" style="left:1527px;top:6px;" width="16" height="15" viewBox="0 0 16 15"><path d="M3 13 L6.5 4 L9 13 Z" fill="#dcdcdc"/><circle cx="11.5" cy="5" r="2" fill="#dcdcdc"/><circle cx="8.8" cy="10.6" r="3" fill="#282828" stroke="#dcdcdc" stroke-width="1.1"/></svg>
<svg class="a" style="left:1544.5px;top:10.5px;" width="7.0" height="5.0" viewBox="0 0 7.0 5.0"><path d="M1 1.25 L3.5 3.75 L6.0 1.25" fill="none" stroke="#cfcfcf" stroke-width="1.2"/></svg>
<div class="t" style="left:1562px;top:8.0px;font-size:11px;line-height:11px;color:#e6e6e6;">Scene</div>
<svg class="a" style="left:1656px;top:6px;" width="16" height="15" viewBox="0 0 16 15"><path d="M2 14 L7 9 M5 6 L11 12 M7 4 L10 1 L15 6 L12 9 Z" fill="none" stroke="#8a8a8a" stroke-width="1.1"/></svg>
<svg class="a" style="left:1678px;top:6px;" width="14" height="14" viewBox="0 0 14 14"><rect x="1.5" y="4.5" width="7" height="8" fill="none" stroke="#cfcfcf" stroke-width="1.1"/><path d="M4.5 4.5 V1.5 H10 L12.5 4 V10.5 H8.5" fill="none" stroke="#cfcfcf" stroke-width="1.1"/></svg>
<svg class="a" style="left:1699px;top:8px;" width="10" height="10" viewBox="0 0 10 10"><path d="M1 1 L9 9 M9 1 L1 9" stroke="#6a6a6a" stroke-width="1.1"/></svg>
<div class="a" style="left:1720px;top:4px;width:191px;height:18px;background:#1d1d1d;border-radius:4px;border:1px solid #2a2a2a"></div>
<div class="a" style="left:1721px;top:5px;width:31px;height:16px;background:#282828;border-radius:0px;border-radius:3px 0 0 3px"></div>
<div class="a" style="left:1871px;top:5px;width:20px;height:16px;background:#3d3d3d;border-radius:0px;"></div>
<div class="a" style="left:1891px;top:5px;width:19px;height:16px;background:#282828;border-radius:0px;border-radius:0 3px 3px 0"></div>
<svg class="a" style="left:1724px;top:6px;" width="16" height="15" viewBox="0 0 16 15"><rect x="5" y="2" width="9" height="8" fill="#282828" stroke="#dcdcdc" stroke-width="1.1"/><path d="M3 4 V12 H12 M1 6 V14 H10" fill="none" stroke="#dcdcdc" stroke-width="1.1"/><path d="M6 9 L9 5 L11 8 L13 6 V9 Z" fill="#dcdcdc"/></svg>
<svg class="a" style="left:1741.5px;top:10.5px;" width="7.0" height="5.0" viewBox="0 0 7.0 5.0"><path d="M1 1.25 L3.5 3.75 L6.0 1.25" fill="none" stroke="#cfcfcf" stroke-width="1.2"/></svg>
<div class="t" style="left:1759px;top:8.0px;font-size:11px;line-height:11px;color:#e6e6e6;">ViewLayer</div>
<svg class="a" style="left:1874px;top:6px;" width="14" height="14" viewBox="0 0 14 14"><rect x="1.5" y="4.5" width="7" height="8" fill="none" stroke="#cfcfcf" stroke-width="1.1"/><path d="M4.5 4.5 V1.5 H10 L12.5 4 V10.5 H8.5" fill="none" stroke="#cfcfcf" stroke-width="1.1"/></svg>
<svg class="a" style="left:1896px;top:8px;" width="10" height="10" viewBox="0 0 10 10"><path d="M1 1 L9 9 M9 1 L1 9" stroke="#6a6a6a" stroke-width="1.1"/></svg>
<div class="a" style="left:10px;top:30px;width:30px;height:18px;background:#282828;border-radius:4px;border:1px solid #222222"></div>
<svg class="a" style="left:13px;top:31px;" width="18" height="16" viewBox="0 0 18 16"><circle cx="11.5" cy="4.5" r="3" fill="#e0e0e0"/><path d="M1 10 H10 M1 13.5 H13 M4 7.5 L3 15.5 M9 9 L8.5 15.5" stroke="#e0e0e0" stroke-width="1.1" fill="none"/></svg>
<svg class="a" style="left:30.5px;top:36.5px;" width="7.0" height="5.0" viewBox="0 0 7.0 5.0"><path d="M1 1.25 L3.5 3.75 L6.0 1.25" fill="none" stroke="#d0d0d0" stroke-width="1.2"/></svg>
<div class="a" style="left:47px;top:30px;width:108px;height:18px;background:#282828;border-radius:4px;border:1px solid #222222"></div>
<svg class="a" style="left:51px;top:32px;" width="14" height="14" viewBox="0 0 14 14"><rect x="3.5" y="3.5" width="7" height="7" fill="#e0e0e0"/><path d="M0.5 3.5 V0.5 H3.5 M10.5 0.5 H13.5 V3.5 M13.5 10.5 V13.5 H10.5 M3.5 13.5 H0.5 V10.5" stroke="#cfcfcf" stroke-width="1" fill="none"/></svg>
<div class="t" style="left:72px;top:34.0px;font-size:11px;line-height:11px;color:#e6e6e6;">Object Mode</div>
<svg class="a" style="left:145px;top:36px;" width="8" height="6" viewBox="0 0 8 6"><path d="M1 1.5 L4 4.5 L7 1.5" fill="none" stroke="#d0d0d0" stroke-width="1.2"/></svg>
<div class="t" style="left:168px;top:34.0px;font-size:11px;line-height:11px;color:#e6e6e6;">View</div>
<div class="t" style="left:208px;top:34.0px;font-size:11px;line-height:11px;color:#e6e6e6;">Select</div>
<div class="t" style="left:254px;top:34.0px;font-size:11px;line-height:11px;color:#e6e6e6;">Add</div>
<div class="t" style="left:288px;top:34.0px;font-size:11px;line-height:11px;color:#e6e6e6;">Object</div>
<div class="a" style="left:668px;top:30px;width:78px;height:18px;background:#282828;border-radius:4px;border:1px solid #222222"></div>
<svg class="a" style="left:673px;top:31px;" width="16" height="16" viewBox="0 0 16 16"><path d="M3 2 V13 H14 M3 13 L12 4" stroke="#dcdcdc" stroke-width="1.1" fill="none"/><path d="M1.5 4 L3 1.5 L4.5 4 M12 11.5 L14.5 13 L12 14.5 M9 4 L12 4 L12 7" stroke="#dcdcdc" stroke-width="1" fill="none"/><circle cx="3" cy="13" r="1.3" fill="#282828" stroke="#dcdcdc"/></svg>
<div class="t" style="left:694px;top:34.0px;font-size:11px;line-height:11px;color:#e6e6e6;">Global</div>
<svg class="a" style="left:736px;top:36px;" width="8" height="6" viewBox="0 0 8 6"><path d="M1 1.5 L4 4.5 L7 1.5" fill="none" stroke="#d0d0d0" stroke-width="1.2"/></svg>
<div class="a" style="left:753px;top:30px;width:30px;height:18px;background:#282828;border-radius:4px;border:1px solid #222222"></div>
<svg class="a" style="left:756px;top:31px;" width="16" height="16" viewBox="0 0 16 16"><circle cx="5.5" cy="10.5" r="4" fill="none" stroke="#dcdcdc" stroke-width="1.1"/><circle cx="5.5" cy="10.5" r="1.5" fill="#dcdcdc"/><circle cx="10.5" cy="5.5" r="4" fill="none" stroke="#dcdcdc" stroke-width="1.1"/><circle cx="10.5" cy="5.5" r="1.3" fill="#dcdcdc"/></svg>
<svg class="a" style="left:773.5px;top:36.5px;" width="7.0" height="5.0" viewBox="0 0 7.0 5.0"><path d="M1 1.25 L3.5 3.75 L6.0 1.25" fill="none" stroke="#d0d0d0" stroke-width="1.2"/></svg>
<div class="a" style="left:790px;top:30px;width:50px;height:18px;background:#282828;border-radius:4px;border:1px solid #222222"></div>
<div class="a" style="left:791px;top:31px;width:18px;height:16px;background:#545454;border-radius:0px;border-radius:3px 0 0 3px"></div>
<svg class="a" style="left:792px;top:32px;" width="16" height="14" viewBox="0 0 16 14"><path d="M4 8 A4.5 4.5 0 1 1 11 10 L9 12" fill="none" stroke="#bdbdbd" stroke-width="1.6"/></svg>
<svg class="a" style="left:811px;top:33px;" width="16" height="14" viewBox="0 0 16 14"><rect x="9" y="0" width="3" height="3" fill="#e0e0e0"/><path d="M1 8 H13 M1 5 V11 M5 6 V10 M9 6 V10 M13 5 V11" stroke="#dcdcdc" stroke-width="1.1" fill="none"/></svg>
<svg class="a" style="left:829.5px;top:36.5px;" width="7.0" height="5.0" viewBox="0 0 7.0 5.0"><path d="M1 1.25 L3.5 3.75 L6.0 1.25" fill="none" stroke="#d0d0d0" stroke-width="1.2"/></svg>
<div class="a" style="left:847px;top:30px;width:50px;height:18px;background:#282828;border-radius:4px;border:1px solid #222222"></div>
<div class="a" style="left:848px;top:31px;width:18px;height:16px;background:#545454;border-radius:0px;border-radius:3px 0 0 3px"></div>
<svg class="a" style="left:849px;top:32px;" width="16" height="14" viewBox="0 0 16 14"><circle cx="8" cy="7" r="5" fill="none" stroke="#777" stroke-width="1"/><circle cx="8" cy="7" r="1.6" fill="#dcdcdc"/></svg>
<svg class="a" style="left:869px;top:33px;" width="16" height="14" viewBox="0 0 16 14"><path d="M1 12 A6.5 7 0 0 1 14 12" fill="none" stroke="#dcdcdc" stroke-width="1.1"/></svg>
<svg class="a" style="left:887.5px;top:36.5px;" width="7.0" height="5.0" viewBox="0 0 7.0 5.0"><path d="M1 1.25 L3.5 3.75 L6.0 1.25" fill="none" stroke="#777" stroke-width="1.2"/></svg>
<div class="a" style="left:1330px;top:30px;width:30px;height:18px;background:#282828;border-radius:4px;border:1px solid #222222"></div>
<svg class="a" style="left:1332px;top:31px;" width="18" height="16" viewBox="0 0 18 16"><path d="M2 4 L8 7 L5 8 L4 12 Z" fill="#dcdcdc"/><path d="M6 4 Q10 -0.5 14 4 Q10 8.5 6 4 Z" fill="none" stroke="#dcdcdc" stroke-width="1.2"/><circle cx="10" cy="4" r="1.4" fill="#dcdcdc"/></svg>
<svg class="a" style="left:1350.5px;top:36.5px;" width="7.0" height="5.0" viewBox="0 0 7.0 5.0"><path d="M1 1.25 L3.5 3.75 L6.0 1.25" fill="none" stroke="#d0d0d0" stroke-width="1.2"/></svg>
<div class="a" style="left:1367px;top:30px;width:38px;height:18px;background:#282828;border-radius:4px;border:1px solid #222222"></div>
<div class="a" style="left:1368px;top:31px;width:18px;height:16px;background:#4772b3;border-radius:0px;border-radius:3px 0 0 3px"></div>
<svg class="a" style="left:1369px;top:32px;" width="16" height="14" viewBox="0 0 16 14"><path d="M3 12 A10 10 0 0 1 12 2 M12 2 A10 10 0 0 1 13.5 12" fill="none" stroke="#e8e8e8" stroke-width="1"/><circle cx="4" cy="11.5" r="1.6" fill="#4772b3" stroke="#e8e8e8"/><path d="M10 2 H14 V6" fill="none" stroke="#e8e8e8"/></svg>
<svg class="a" style="left:1393.5px;top:36.5px;" width="7.0" height="5.0" viewBox="0 0 7.0 5.0"><path d="M1 1.25 L3.5 3.75 L6.0 1.25" fill="none" stroke="#d0d0d0" stroke-width="1.2"/></svg>
<div class="a" style="left:1412px;top:30px;width:38px;height:18px;background:#282828;border-radius:4px;border:1px solid #222222"></div>
<div class="a" style="left:1413px;top:31px;width:18px;height:16px;background:#4772b3;border-radius:0px;border-radius:3px 0 0 3px"></div>
<svg class="a" style="left:1414px;top:32px;" width="16" height="14" viewBox="0 0 16 14"><circle cx="6" cy="8.5" r="4.3" fill="none" stroke="#e8e8e8" stroke-width="1.2"/><circle cx="9.5" cy="5" r="4.5" fill="#e8e8e8"/></svg>
<svg class="a" style="left:1438.5px;top:36.5px;" width="7.0" height="5.0" viewBox="0 0 7.0 5.0"><path d="M1 1.25 L3.5 3.75 L6.0 1.25" fill="none" stroke="#d0d0d0" stroke-width="1.2"/></svg>
<div class="a" style="left:1457px;top:30px;width:18px;height:18px;background:#4772b3;border-radius:4px;border:1px solid #222222"></div>
<svg class="a" style="left:1459px;top:32px;" width="14" height="14" viewBox="0 0 14 14"><rect x="1" y="4" width="8.5" height="8.5" fill="none" stroke="#e8e8e8" stroke-width="1.1"/><path d="M4 4 V1 H13 V10 H9.5" fill="none" stroke="#e8e8e8" stroke-width="1.1"/><path d="M4 7 V9 H6" stroke="#e8e8e8" stroke-width="1"/></svg>
<div class="a" style="left:1482px;top:30px;width:95px;height:18px;background:#282828;border-radius:4px;border:1px solid #222222"></div>
<div class="a" style="left:1483px;top:31px;width:18px;height:16px;background:#4772b3;border-radius:0px;border-radius:3px 0 0 3px"></div>
<div class="a" style="left:1501px;top:31px;width:19px;height:16px;background:#545454;border-radius:0px;"></div>
<div class="a" style="left:1520px;top:31px;width:19px;height:16px;background:#545454;border-radius:0px;"></div>
<div class="a" style="left:1539px;top:31px;width:18px;height:16px;background:#545454;border-radius:0px;"></div>
<svg class="a" style="left:1484px;top:32px;" width="16" height="14" viewBox="0 0 16 14"><circle cx="8" cy="7" r="5.6" fill="none" stroke="#e8e8e8" stroke-width="1.1"/><ellipse cx="8" cy="7" rx="2.6" ry="5.6" fill="none" stroke="#e8e8e8"/><path d="M2.5 5 H13.5 M2.5 9 H13.5" stroke="#e8e8e8"/></svg>
<svg class="a" style="left:1503px;top:32px;" width="16" height="14" viewBox="0 0 16 14"><circle cx="7.5" cy="7" r="5.6" fill="#c8c8c8"/></svg>
<svg class="a" style="left:1522px;top:32px;" width="16" height="14" viewBox="0 0 16 14"><circle cx="7.5" cy="7" r="5.4" fill="none" stroke="#c8c8c8" stroke-width="1.1"/><path d="M7.5 7 V1.6 A5.4 5.4 0 0 0 2.1 7 Z M7.5 7 L11 11.2 A5.4 5.4 0 0 1 2.1 7 Z" fill="#c8c8c8"/></svg>
<svg class="a" style="left:1541px;top:32px;" width="16" height="14" viewBox="0 0 16 14"><circle cx="7.5" cy="7" r="5.4" fill="none" stroke="#c8c8c8" stroke-width="1.1"/><path d="M4 5 A3.5 3.5 0 0 1 7.5 2.5" fill="none" stroke="#c8c8c8" stroke-width="1"/></svg>
<svg class="a" style="left:1563.5px;top:36.5px;" width="7.0" height="5.0" viewBox="0 0 7.0 5.0"><path d="M1 1.25 L3.5 3.75 L6.0 1.25" fill="none" stroke="#d0d0d0" stroke-width="1.2"/></svg>
<div class="a" style="left:45px;top:57px;width:94px;height:18px;background:#464646;border-radius:4px;border:1px solid #3a3a3a"></div>
<div class="a" style="left:46px;top:58px;width:18.5px;height:16px;background:#4772b3;border-radius:0px;border-radius:3px 0 0 3px"></div>
<div class="a" style="left:83.5px;top:58px;width:1px;height:16px;background:#3a3a3a;border-radius:0px;"></div>
<div class="a" style="left:102.5px;top:58px;width:1px;height:16px;background:#3a3a3a;border-radius:0px;"></div>
<div class="a" style="left:121.5px;top:58px;width:1px;height:16px;background:#3a3a3a;border-radius:0px;"></div>
<svg class="a" style="left:47px;top:59px;" width="16" height="14" viewBox="0 0 16 14"><rect x="2.5" y="1.5" width="11" height="11" fill="none" stroke="#ffffff" stroke-width="1.2" stroke-dasharray="2.2 1.6"/></svg>
<svg class="a" style="left:65px;top:59px;" width="16" height="14" viewBox="0 0 16 14"><path d="M2 6 H6.5 V1.5 H14 V9 H9.5 V13 H2 Z" fill="#c8c8c8"/></svg>
<svg class="a" style="left:84px;top:59px;" width="16" height="14" viewBox="0 0 16 14"><rect x="2.5" y="6.5" width="6.5" height="6" fill="none" stroke="#c8c8c8" stroke-width="1" stroke-dasharray="1.6 1.4"/><path d="M6.5 1.5 H14 V9 H10 V5.5 H6.5 Z" fill="#c8c8c8"/></svg>
<svg class="a" style="left:103px;top:59px;" width="16" height="14" viewBox="0 0 16 14"><path d="M2 6 H6.5 V1.5 H14 V9 H9.5 V13 H2 Z M6.5 6 V9 H9.5 V6 Z" fill="#c8c8c8" fill-rule="evenodd"/></svg>
<svg class="a" style="left:122px;top:59px;" width="16" height="14" viewBox="0 0 16 14"><rect x="2" y="1.5" width="12" height="11" fill="none" stroke="#c8c8c8" stroke-width="1.1" stroke-dasharray="1.8 1.5"/><rect x="5.5" y="4.5" width="5.5" height="5" fill="#c8c8c8"/></svg>
<div class="a" style="left:1518px;top:57px;width:60px;height:18px;background:#282828;border-radius:4px;border:1px solid #222222"></div>
<div class="t" style="left:1526px;top:61.0px;font-size:11px;line-height:11px;color:#e6e6e6;">Options</div>
<svg class="a" style="left:1566.5px;top:63.5px;" width="7.0" height="5.0" viewBox="0 0 7.0 5.0"><path d="M1 1.25 L3.5 3.75 L6.0 1.25" fill="none" stroke="#d0d0d0" stroke-width="1.2"/></svg>
<div class="t" style="left:67px;top:89.0px;font-size:11px;line-height:11px;color:#e6e6e6;">User Perspective</div>
<div class="t" style="left:67px;top:107.0px;font-size:11px;line-height:11px;color:#e6e6e6;">(0) Scene Collection | Camera</div>
<div class="a" style="left:9px;top:87px;width:39px;height:67px;background:#282828;border-radius:5px;"></div>
<div class="a" style="left:9px;top:163px;width:39px;height:136px;background:#282828;border-radius:5px;"></div>
<div class="a" style="left:9px;top:307px;width:39px;height:67px;background:#282828;border-radius:5px;"></div>
<div class="a" style="left:9px;top:382px;width:39px;height:33px;background:#282828;border-radius:5px;"></div>
<div class="a" style="left:9px;top:87px;width:39px;height:32.5px;background:#4772b3;border-radius:0px;border-radius:5px 5px 0 0"></div>
<svg class="a" style="left:19px;top:92px;" width="20" height="22" viewBox="0 0 20 22"><rect x="2.5" y="3.5" width="15" height="14" fill="none" stroke="#e8a04a" stroke-width="1.2" stroke-dasharray="3 2"/><path d="M7 6 L14 11 L10.5 11.5 L9 15 Z" fill="#ffffff"/></svg>
<svg class="a" style="left:44px;top:114px;" width="4" height="4" viewBox="0 0 4 4"><path d="M3 0 V3 H0 Z" fill="#cfd8e8"/></svg>
<svg class="a" style="left:17px;top:128px;" width="22" height="22" viewBox="0 0 22 22"><circle cx="11" cy="11" r="8.5" fill="none" stroke="#e6e6e6" stroke-width="1.6" stroke-dasharray="3.5 2.2"/><circle cx="11" cy="11" r="8.5" fill="none" stroke="#b03030" stroke-width="1.6" stroke-dasharray="2.2 3.5" stroke-dashoffset="-3.5"/><path d="M11 6 V9 M11 13 V16 M6 11 H9 M13 11 H16" stroke="#cfcfcf" stroke-width="1.1"/></svg>
<svg class="a" style="left:17px;top:167px;" width="22" height="22" viewBox="0 0 22 22"><path d="M11 3 V19 M3 11 H19" stroke="#e6e6e6" stroke-width="1.3" stroke-dasharray="2.5 2"/><path d="M11 1 L8.5 4.5 H13.5 Z M11 21 L8.5 17.5 H13.5 Z M1 11 L4.5 8.5 V13.5 Z M21 11 L17.5 8.5 V13.5 Z" fill="#e6e6e6"/></svg>
<svg class="a" style="left:17px;top:202px;" width="22" height="22" viewBox="0 0 22 22"><path d="M4 8 A7.5 7.5 0 0 1 18 8 M18 14 A7.5 7.5 0 0 1 4 14" fill="none" stroke="#e6e6e6" stroke-width="1.3"/><path d="M11 7.5 L14 11 L11 14.5 L8 11 Z" fill="#e6e6e6"/><path d="M2 9.5 L4 6 L6.5 9.5 Z M20 12.5 L18 16 L15.5 12.5 Z" fill="#e6e6e6"/></svg>
<svg class="a" style="left:17px;top:237px;" width="22" height="22" viewBox="0 0 22 22"><rect x="2" y="10" width="10" height="10" fill="#e6e6e6"/><path d="M6 10 V2.5 H19.5 V16 H12" fill="none" stroke="#e6e6e6" stroke-width="1.2"/><path d="M11 11 L17 5 M13 5 H17 V9" fill="none" stroke="#e6e6e6" stroke-width="1.3"/></svg>
<svg class="a" style="left:44px;top:259px;" width="4" height="4" viewBox="0 0 4 4"><path d="M3 0 V3 H0 Z" fill="#aaaaaa"/></svg>
<svg class="a" style="left:17px;top:272px;" width="22" height="22" viewBox="0 0 22 22"><circle cx="11" cy="11" r="8.3" fill="none" stroke="#e6e6e6" stroke-width="1.3" stroke-dasharray="4 2.5"/><rect x="7" y="7" width="8" height="8" fill="#e6e6e6"/><path d="M11 0.5 L9 3 H13 Z M11 21.5 L9 19 H13 Z M0.5 11 L3 9 V13 Z M21.5 11 L19 9 V13 Z" fill="#e6e6e6"/></svg>
<svg class="a" style="left:16px;top:311px;" width="24" height="24" viewBox="0 0 24 24"><path d="M4 14 L14 4 L17 7 L7 17 L3 18 Z" fill="#e6e6e6"/><path d="M2 21 Q8 15 12 19 T22 16" fill="none" stroke="#6fcf97" stroke-width="1.3"/></svg>
<svg class="a" style="left:44px;top:335px;" width="4" height="4" viewBox="0 0 4 4"><path d="M3 0 V3 H0 Z" fill="#aaaaaa"/></svg>
<svg class="a" style="left:17px;top:345px;" width="22" height="24" viewBox="0 0 22 24"><path d="M2.5 2 V20.5 H21" fill="none" stroke="#e6e6e6" stroke-width="2"/><path d="M4 7 V19 H20 A16 12 0 0 0 4 7 Z" fill="#8fdcb8"/><path d="M5 5 H8 M5 9 H7 M5 13 H8 M7 22 V19 M11 22 V19 M15 22 V19 M19 22 V19" stroke="#e6e6e6" stroke-width="1"/></svg>
<svg class="a" style="left:16px;top:385px;" width="24" height="26" viewBox="0 0 24 26"><path d="M6 10 H18 V22 H6 Z M6 10 L10 6 H22 V18 L18 22 M18 10 L22 6" fill="none" stroke="#8fdcb8" stroke-width="1.2"/><path d="M5 1 V9 M1 5 H9" stroke="#8fdcb8" stroke-width="2"/></svg>
<svg class="a" style="left:44px;top:410px;" width="4" height="4" viewBox="0 0 4 4"><path d="M3 0 V3 H0 Z" fill="#aaaaaa"/></svg>
<svg class="a" style="left:1490px;top:80px;" width="90" height="100" viewBox="0 0 90 100"><line x1="45.4" y1="16.4" x2="45.4" y2="48.8" stroke="#2a6bc6" stroke-width="2"/><line x1="46.5" y1="48.8" x2="77" y2="48.8" stroke="#c03a4c" stroke-width="2"/><circle cx="12.6" cy="48.8" r="8" fill="#4a2028" stroke="#b03446" stroke-width="1.5"/><circle cx="45.4" cy="80" r="8" fill="#1c3352" stroke="#2a6bc6" stroke-width="1.5"/><circle cx="44" cy="48" r="8.5" fill="#3c6a1a"/><circle cx="46.5" cy="48.8" r="8" fill="#2f4a1f" stroke="#a8d83a" stroke-width="1.6"/><circle cx="45.4" cy="16.4" r="8" fill="#2a6bc6"/><circle cx="77" cy="48.8" r="8" fill="#c8334a"/><path d="M41.8 12.5 H49 L41.8 20.3 H49" fill="none" stroke="#10243f" stroke-width="1.5"/><path d="M73.5 45 L80.5 52.6 M80.5 45 L73.5 52.6" stroke="#3a0d14" stroke-width="1.5"/></svg>
<svg class="a" style="left:1549px;top:168.3px;" width="28" height="28" viewBox="0 0 28 28"><circle cx="14" cy="14" r="13.5" fill="#333333"/></svg>
<svg class="a" style="left:1549px;top:198.4px;" width="28" height="28" viewBox="0 0 28 28"><circle cx="14" cy="14" r="13.5" fill="#333333"/></svg>
<svg class="a" style="left:1549px;top:229px;" width="28" height="28" viewBox="0 0 28 28"><circle cx="14" cy="14" r="13.5" fill="#333333"/></svg>
<svg class="a" style="left:1549px;top:258.7px;" width="28" height="28" viewBox="0 0 28 28"><circle cx="14" cy="14" r="13.5" fill="#333333"/></svg>
<svg class="a" style="left:1554px;top:173px;" width="18" height="18" viewBox="0 0 18 18"><circle cx="10" cy="8" r="5.5" fill="#e6e6e6"/><path d="M10 5 V11 M7 8 H13" stroke="#333" stroke-width="1.3"/><path d="M6.5 11.5 L1.5 16.5" stroke="#e6e6e6" stroke-width="2.4" stroke-linecap="round"/></svg>
<svg class="a" style="left:1554px;top:203px;" width="18" height="19" viewBox="0 0 18 19"><path d="M4 9 V4.5 Q4 3 5 3 Q6 3 6 4.5 V8 V2.5 Q6 1 7 1 Q8 1 8 2.5 V8 V2 Q8 0.5 9.2 0.5 Q10.3 0.5 10.3 2 V8 V3.5 Q10.3 2 11.3 2 Q12.5 2 12.5 3.5 V11 L14.5 8 Q15.5 7 16.3 7.8 Q17 8.5 16 10 L12.5 16 Q11 18 8 18 Q4 18 4 13 Z" fill="#e6e6e6"/></svg>
<svg class="a" style="left:1553px;top:233px;" width="20" height="19" viewBox="0 0 20 19"><circle cx="7" cy="6" r="4" fill="#e6e6e6"/><circle cx="14" cy="5" r="4" fill="#e6e6e6"/><circle cx="7" cy="6" r="1.3" fill="#333"/><circle cx="14" cy="5" r="1.3" fill="#333"/><rect x="5" y="10" width="10" height="6" fill="#e6e6e6"/><path d="M15 13 L19 10 V16 Z M1.5 11 H5 M1.5 15 H5 M1.5 11 V15" fill="#e6e6e6" stroke="#e6e6e6" stroke-width="1"/></svg>
<svg class="a" style="left:1555px;top:264px;" width="17" height="17" viewBox="0 0 17 17"><path d="M4 1 H13 L16 16 H1 Z M1.7 12 H15.3 M2.5 8 H14.5 M3.2 4.5 H13.8 M6.7 1 L5.7 16 M10.3 1 L11.3 16" fill="none" stroke="#e6e6e6" stroke-width="1.2"/></svg>
<svg class="a" style="left:1578px;top:93px;" width="6" height="13" viewBox="0 0 6 13"><path d="M5 1 L1 6.5 L5 12" fill="none" stroke="#9a9a9a" stroke-width="1.1"/></svg>
<div class="a" style="left:1597px;top:30px;width:30px;height:18px;background:#282828;border-radius:4px;border:1px solid #222222"></div>
<svg class="a" style="left:1600px;top:31px;" width="18" height="16" viewBox="0 0 18 16"><rect x="2" y="1.5" width="5" height="3" fill="#e0e0e0"/><path d="M3.5 4.5 V12.5 H6" stroke="#e0e0e0" fill="none"/><rect x="6" y="7" width="7" height="2.5" fill="#e0e0e0"/><rect x="6" y="11" width="7" height="2.5" fill="#e0e0e0"/></svg>
<svg class="a" style="left:1617.5px;top:36.5px;" width="7.0" height="5.0" viewBox="0 0 7.0 5.0"><path d="M1 1.25 L3.5 3.75 L6.0 1.25" fill="none" stroke="#d0d0d0" stroke-width="1.2"/></svg>
<div class="a" style="left:1633px;top:30px;width:32px;height:18px;background:#282828;border-radius:4px;border:1px solid #222222"></div>
<svg class="a" style="left:1636px;top:31px;" width="18" height="16" viewBox="0 0 18 16"><rect x="6" y="2" width="9" height="8" fill="#282828" stroke="#dcdcdc" stroke-width="1.1"/><path d="M4 4 V12 H13 M2 6 V14 H11" fill="none" stroke="#dcdcdc" stroke-width="1.1"/><path d="M7 9 L10 5 L12 8 L14 6 V9 Z" fill="#dcdcdc"/><circle cx="12.5" cy="4" r="1" fill="#dcdcdc"/></svg>
<svg class="a" style="left:1655.5px;top:36.5px;" width="7.0" height="5.0" viewBox="0 0 7.0 5.0"><path d="M1 1.25 L3.5 3.75 L6.0 1.25" fill="none" stroke="#d0d0d0" stroke-width="1.2"/></svg>
<div class="a" style="left:1687px;top:30px;width:110px;height:18px;background:#1d1d1d;border-radius:4px;border:1px solid #262626"></div>
<svg class="a" style="left:1692px;top:32px;" width="14" height="14" viewBox="0 0 14 14"><circle cx="8.5" cy="5.5" r="4" fill="none" stroke="#dcdcdc" stroke-width="1.1"/><path d="M5.7 8.3 L1.5 12.5" stroke="#dcdcdc" stroke-width="1.2"/></svg>
<div class="a" style="left:1855px;top:30px;width:32px;height:18px;background:#282828;border-radius:4px;border:1px solid #222222"></div>
<svg class="a" style="left:1858px;top:31px;" width="16" height="16" viewBox="0 0 16 16"><path d="M1.5 2 H13.5 L8.5 8 V14.5 L6.5 13 V8 Z" fill="none" stroke="#dcdcdc" stroke-width="1.1"/></svg>
<svg class="a" style="left:1877.5px;top:36.5px;" width="7.0" height="5.0" viewBox="0 0 7.0 5.0"><path d="M1 1.25 L3.5 3.75 L6.0 1.25" fill="none" stroke="#d0d0d0" stroke-width="1.2"/></svg>
<div class="a" style="left:1892px;top:30px;width:19px;height:18px;background:#3d3d3d;border-radius:4px;"></div>
<svg class="a" style="left:1894px;top:31px;" width="16" height="16" viewBox="0 0 16 16"><rect x="2" y="5" width="8" height="3" fill="none" stroke="#bbb" stroke-width="1"/><rect x="2.5" y="8" width="7" height="6.5" fill="none" stroke="#bbb" stroke-width="1"/><circle cx="12" cy="4.5" r="3.5" fill="#e6e6e6"/><path d="M12 2.5 V6.5 M10 4.5 H14" stroke="#3d3d3d" stroke-width="1.2"/></svg>
<div class="a" style="left:1588px;top:74px;width:332px;height:20px;background:#2b2b2b;border-radius:0px;"></div>
<div class="a" style="left:1588px;top:114px;width:332px;height:20px;background:#2b2b2b;border-radius:0px;"></div>
<div class="a" style="left:1588px;top:154px;width:332px;height:20px;background:#2b2b2b;border-radius:0px;"></div>
<div class="a" style="left:1588px;top:194px;width:332px;height:20px;background:#2b2b2b;border-radius:0px;"></div>
<div class="a" style="left:1588px;top:234px;width:332px;height:20px;background:#2b2b2b;border-radius:0px;"></div>
<div class="a" style="left:1588px;top:274px;width:332px;height:20px;background:#2b2b2b;border-radius:0px;"></div>
<div class="a" style="left:1588px;top:314px;width:332px;height:20px;background:#2b2b2b;border-radius:0px;"></div>
<div class="a" style="left:1588px;top:354px;width:332px;height:20px;background:#2b2b2b;border-radius:0px;"></div>
<div class="a" style="left:1588px;top:394px;width:332px;height:20px;background:#2b2b2b;border-radius:0px;"></div>
<div class="a" style="left:1588px;top:434px;width:332px;height:20px;background:#2b2b2b;border-radius:0px;"></div>
<div class="a" style="left:1608px;top:54.5px;width:20px;height:18px;background:#555555;border-radius:4px;"></div>
<div class="a" style="left:1609px;top:55.5px;width:18px;height:16px;background:#3a3a3a;border-radius:3px;"></div>
<svg class="a" style="left:1611px;top:57px;" width="14" height="13" viewBox="0 0 14 13"><rect x="0.5" y="0.5" width="13" height="3.5" fill="#e6e6e6"/><rect x="1.5" y="5" width="11" height="7.5" fill="#e6e6e6"/><rect x="5" y="6.5" width="4" height="2" fill="#3a3a3a"/></svg>
<div class="t" style="left:1633px;top:59.0px;font-size:11px;line-height:11px;color:#e6e6e6;">Scene Collection</div>
<svg class="a" style="left:1615px;top:80px;" width="7" height="8" viewBox="0 0 7 8"><path d="M0.5 0.5 L6 4 L0.5 7.5 Z" fill="#b8b8b8"/></svg>
<svg class="a" style="left:1631px;top:77px;" width="15" height="14" viewBox="0 0 15 14"><rect x="0.5" y="0.5" width="14" height="4" fill="#e6e6e6"/><rect x="1.5" y="5.5" width="12" height="8" fill="#e6e6e6"/><rect x="5.5" y="7.5" width="4" height="2" fill="#282828"/></svg>
<div class="t" style="left:1653px;top:79.0px;font-size:11px;line-height:11px;color:#e6e6e6;">Text &amp; BG</div>
<svg class="a" style="left:1726px;top:76px;" width="26" height="18" viewBox="0 0 26 18"><path d="M1.5 1.5 H12.5 L7 12 Z" fill="none" stroke="#e6a05a" stroke-width="2.5" stroke-linejoin="round"/><circle cx="13.2" cy="12" r="5.5" fill="#141414"/><text x="13.2" y="15.5" font-size="9" font-family="Liberation Sans" fill="#ffffff" text-anchor="middle">3</text></svg>
<svg class="a" style="left:1615px;top:100px;" width="7" height="8" viewBox="0 0 7 8"><path d="M0.5 0.5 L6 4 L0.5 7.5 Z" fill="#b8b8b8"/></svg>
<svg class="a" style="left:1631px;top:97px;" width="15" height="14" viewBox="0 0 15 14"><rect x="0.5" y="0.5" width="14" height="4" fill="#e6e6e6"/><rect x="1.5" y="5.5" width="12" height="8" fill="#e6e6e6"/><rect x="5.5" y="7.5" width="4" height="2" fill="#282828"/></svg>
<div class="t" style="left:1653px;top:99.0px;font-size:11px;line-height:11px;color:#e6e6e6;">Leaves</div>
<svg class="a" style="left:1710px;top:96px;" width="26" height="18" viewBox="0 0 26 18"><path d="M1.5 1.5 H12.5 L7 12 Z" fill="none" stroke="#e6a05a" stroke-width="2.5" stroke-linejoin="round"/><circle cx="15.4" cy="12" r="6.800000000000001" fill="#141414"/><text x="15.4" y="15.5" font-size="9" font-family="Liberation Sans" fill="#ffffff" text-anchor="middle">34</text></svg>
<svg class="a" style="left:1615px;top:120px;" width="7" height="8" viewBox="0 0 7 8"><path d="M0.5 0.5 L6 4 L0.5 7.5 Z" fill="#b8b8b8"/></svg>
<svg class="a" style="left:1631px;top:117px;" width="15" height="14" viewBox="0 0 15 14"><rect x="0.5" y="0.5" width="14" height="4" fill="#e6e6e6"/><rect x="1.5" y="5.5" width="12" height="8" fill="#e6e6e6"/><rect x="5.5" y="7.5" width="4" height="2" fill="#282828"/></svg>
<div class="t" style="left:1653px;top:119.0px;font-size:11px;line-height:11px;color:#e6e6e6;">Pipe</div>
<svg class="a" style="left:1696px;top:116px;" width="26" height="18" viewBox="0 0 26 18"><path d="M1.5 1.5 H12.5 L7 12 Z" fill="none" stroke="#e6a05a" stroke-width="2.5" stroke-linejoin="round"/><circle cx="13.2" cy="12" r="5.5" fill="#141414"/><text x="13.2" y="15.5" font-size="9" font-family="Liberation Sans" fill="#ffffff" text-anchor="middle">4</text></svg>
<svg class="a" style="left:1615px;top:140px;" width="7" height="8" viewBox="0 0 7 8"><path d="M0.5 0.5 L6 4 L0.5 7.5 Z" fill="#b8b8b8"/></svg>
<svg class="a" style="left:1631px;top:137px;" width="15" height="14" viewBox="0 0 15 14"><rect x="0.5" y="0.5" width="14" height="4" fill="#e6e6e6"/><rect x="1.5" y="5.5" width="12" height="8" fill="#e6e6e6"/><rect x="5.5" y="7.5" width="4" height="2" fill="#282828"/></svg>
<div class="t" style="left:1653px;top:139.0px;font-size:11px;line-height:11px;color:#e6e6e6;">Lights</div>
<svg class="a" style="left:1706px;top:136px;" width="22" height="18" viewBox="0 0 22 18"><circle cx="6" cy="6" r="5" fill="#e6a05a"/><path d="M3.5 11 H8.5 M4 13 H8 M4.5 15 H7.5" stroke="#e6a05a" stroke-width="1.2"/><path d="M4 4 V7 M8 4 V7 M4 5.5 H8" stroke="#5a3a1a" stroke-width="0.9"/><circle cx="12" cy="12" r="5" fill="#141414"/><text x="12" y="15.5" font-size="9" font-family="Liberation Sans" fill="#fff" text-anchor="middle">5</text></svg>
<svg class="a" style="left:1631px;top:157px;" width="15" height="14" viewBox="0 0 15 14"><rect x="0.5" y="0.5" width="14" height="4" fill="#7a7a7a"/><rect x="1.5" y="5.5" width="12" height="8" fill="#7a7a7a"/><rect x="5.5" y="7.5" width="4" height="2" fill="#282828"/></svg>
<div class="t" style="left:1653px;top:159.0px;font-size:11px;line-height:11px;color:#7a7a7a;">BG</div>
<svg class="a" style="left:1615px;top:180px;" width="7" height="8" viewBox="0 0 7 8"><path d="M0.5 0.5 L6 4 L0.5 7.5 Z" fill="#b8b8b8"/></svg>
<div class="a" style="left:1628px;top:174.5px;width:19px;height:19px;background:#505050;border-radius:4px;"></div>
<div class="a" style="left:1629px;top:175.5px;width:17px;height:17px;background:#424242;border-radius:3px;"></div>
<svg class="a" style="left:1630px;top:177px;" width="15" height="14" viewBox="0 0 15 14"><circle cx="4.5" cy="4" r="3" fill="#9a6a3e"/><circle cx="10" cy="3.5" r="3" fill="#9a6a3e"/><rect x="2.5" y="7" width="8" height="5" fill="#9a6a3e"/><path d="M10.5 9.5 L14 7.5 V12 Z" fill="#9a6a3e"/></svg>
<div class="t" style="left:1653px;top:179.0px;font-size:11px;line-height:11px;color:#9a9a9a;">Camera</div>
<div class="a" style="left:1711px;top:174.5px;width:20px;height:19px;background:#505050;border-radius:4px;"></div>
<div class="a" style="left:1712px;top:175.5px;width:18px;height:17px;background:#424242;border-radius:3px;"></div>
<svg class="a" style="left:1713px;top:177px;" width="16" height="14" viewBox="0 0 16 14"><path d="M2 6 Q2 1.5 6 2.5 Q8 0.5 11 2 Q14 2 14 5.5 Q14 7 12 7 H4 Q2 7 2 6 Z" fill="none" stroke="#35917a" stroke-width="1.1"/><rect x="4" y="8.5" width="8" height="4" fill="none" stroke="#3fb58f" stroke-width="1.1"/><path d="M12 10.5 L15 8.5 V12.5 Z M1 9 V12" stroke="#3fb58f" fill="#3fb58f"/></svg>
<svg class="a" style="left:1855px;top:79px;" width="11" height="11" viewBox="0 0 11 11"><rect x="0" y="0" width="10.5" height="10.5" fill="#e6e6e6"/><path d="M2.2 5.3 L4.3 7.5 L8.5 2.8" fill="none" stroke="#282828" stroke-width="1.6"/></svg>
<svg class="a" style="left:1873px;top:79px;" width="14" height="10" viewBox="0 0 14 10"><path d="M0.8 5 Q7 -2.5 13.2 5 Q7 12.5 0.8 5 Z" fill="none" stroke="#e6e6e6" stroke-width="1.5"/><circle cx="7" cy="5" r="2.4" fill="none" stroke="#e6e6e6" stroke-width="1.5"/></svg>
<svg class="a" style="left:1893px;top:78px;" width="14" height="12" viewBox="0 0 14 12"><path d="M0.5 3 H3.5 L5 0.8 H9 L10.5 3 H13.5 V11.2 H0.5 Z" fill="#e6e6e6"/><circle cx="7" cy="6.8" r="3.1" fill="none" stroke="#282828" stroke-width="1"/><circle cx="7" cy="6.8" r="1.6" fill="none" stroke="#282828" stroke-width="0.8"/></svg>
<svg class="a" style="left:1855px;top:99px;" width="11" height="11" viewBox="0 0 11 11"><rect x="0" y="0" width="10.5" height="10.5" fill="#e6e6e6"/><path d="M2.2 5.3 L4.3 7.5 L8.5 2.8" fill="none" stroke="#282828" stroke-width="1.6"/></svg>
<svg class="a" style="left:1873px;top:99px;" width="14" height="10" viewBox="0 0 14 10"><path d="M0.8 5 Q7 -2.5 13.2 5 Q7 12.5 0.8 5 Z" fill="none" stroke="#e6e6e6" stroke-width="1.5"/><circle cx="7" cy="5" r="2.4" fill="none" stroke="#e6e6e6" stroke-width="1.5"/></svg>
<svg class="a" style="left:1893px;top:98px;" width="14" height="12" viewBox="0 0 14 12"><path d="M0.5 3 H3.5 L5 0.8 H9 L10.5 3 H13.5 V11.2 H0.5 Z" fill="#e6e6e6"/><circle cx="7" cy="6.8" r="3.1" fill="none" stroke="#282828" stroke-width="1"/><circle cx="7" cy="6.8" r="1.6" fill="none" stroke="#282828" stroke-width="0.8"/></svg>
<svg class="a" style="left:1855px;top:119px;" width="11" height="11" viewBox="0 0 11 11"><rect x="0" y="0" width="10.5" height="10.5" fill="#e6e6e6"/><path d="M2.2 5.3 L4.3 7.5 L8.5 2.8" fill="none" stroke="#282828" stroke-width="1.6"/></svg>
<svg class="a" style="left:1873px;top:119px;" width="14" height="10" viewBox="0 0 14 10"><path d="M0.8 5 Q7 -2.5 13.2 5 Q7 12.5 0.8 5 Z" fill="none" stroke="#e6e6e6" stroke-width="1.5"/><circle cx="7" cy="5" r="2.4" fill="none" stroke="#e6e6e6" stroke-width="1.5"/></svg>
<svg class="a" style="left:1893px;top:118px;" width="14" height="12" viewBox="0 0 14 12"><path d="M0.5 3 H3.5 L5 0.8 H9 L10.5 3 H13.5 V11.2 H0.5 Z" fill="#e6e6e6"/><circle cx="7" cy="6.8" r="3.1" fill="none" stroke="#282828" stroke-width="1"/><circle cx="7" cy="6.8" r="1.6" fill="none" stroke="#282828" stroke-width="0.8"/></svg>
<svg class="a" style="left:1855px;top:139px;" width="11" height="11" viewBox="0 0 11 11"><rect x="0" y="0" width="10.5" height="10.5" fill="#e6e6e6"/><path d="M2.2 5.3 L4.3 7.5 L8.5 2.8" fill="none" stroke="#282828" stroke-width="1.6"/></svg>
<svg class="a" style="left:1873px;top:139px;" width="14" height="10" viewBox="0 0 14 10"><path d="M0.8 5 Q7 -2.5 13.2 5 Q7 12.5 0.8 5 Z" fill="none" stroke="#e6e6e6" stroke-width="1.5"/><circle cx="7" cy="5" r="2.4" fill="none" stroke="#e6e6e6" stroke-width="1.5"/></svg>
<svg class="a" style="left:1893px;top:138px;" width="14" height="12" viewBox="0 0 14 12"><path d="M0.5 3 H3.5 L5 0.8 H9 L10.5 3 H13.5 V11.2 H0.5 Z" fill="#e6e6e6"/><circle cx="7" cy="6.8" r="3.1" fill="none" stroke="#282828" stroke-width="1"/><circle cx="7" cy="6.8" r="1.6" fill="none" stroke="#282828" stroke-width="0.8"/></svg>
<svg class="a" style="left:1855px;top:159px;" width="11" height="11" viewBox="0 0 11 11"><rect x="0.5" y="0.5" width="9.5" height="9.5" fill="none" stroke="#8a8a8a" stroke-width="1"/></svg>
<svg class="a" style="left:1873px;top:159px;" width="14" height="10" viewBox="0 0 14 10"><path d="M1 3.5 Q7 10 13 3.5" fill="none" stroke="#5a5a5a" stroke-width="1"/></svg>
<svg class="a" style="left:1893px;top:158px;" width="14" height="12" viewBox="0 0 14 12"><path d="M0.5 3 H3.5 L5 0.8 H9 L10.5 3 H13.5 V11.2 H0.5 Z" fill="#8a8a8a"/><circle cx="7" cy="6.8" r="3.1" fill="none" stroke="#282828" stroke-width="1"/><circle cx="7" cy="6.8" r="1.6" fill="none" stroke="#282828" stroke-width="0.8"/></svg>
<svg class="a" style="left:1873px;top:179px;" width="14" height="10" viewBox="0 0 14 10"><path d="M1 3.5 Q7 10 13 3.5" fill="none" stroke="#aaaaaa" stroke-width="1"/></svg>
<svg class="a" style="left:1893px;top:178px;" width="14" height="12" viewBox="0 0 14 12"><path d="M0.5 3 H3.5 L5 0.8 H9 L10.5 3 H13.5 V11.2 H0.5 Z" fill="#e6e6e6"/><circle cx="7" cy="6.8" r="3.1" fill="none" stroke="#282828" stroke-width="1"/><circle cx="7" cy="6.8" r="1.6" fill="none" stroke="#282828" stroke-width="0.8"/></svg>
<div class="a" style="left:1597px;top:465px;width:30px;height:18px;background:#282828;border-radius:4px;border:1px solid #222222"></div>
<svg class="a" style="left:1599px;top:466px;" width="18" height="16" viewBox="0 0 18 16"><rect x="1" y="2" width="12" height="5" rx="2.5" fill="#e6e6e6"/><rect x="7" y="3.2" width="4.8" height="2.6" rx="1.3" fill="#282828"/><rect x="1" y="9" width="12" height="5" rx="2.5" fill="#e6e6e6"/><rect x="9" y="10.2" width="2.8" height="2.6" rx="1.3" fill="#282828"/></svg>
<svg class="a" style="left:1617.5px;top:471.5px;" width="7.0" height="5.0" viewBox="0 0 7.0 5.0"><path d="M1 1.25 L3.5 3.75 L6.0 1.25" fill="none" stroke="#d0d0d0" stroke-width="1.2"/></svg>
<div class="a" style="left:1700px;top:465px;width:109px;height:18px;background:#1d1d1d;border-radius:4px;border:1px solid #262626"></div>
<svg class="a" style="left:1703px;top:467px;" width="14" height="14" viewBox="0 0 14 14"><circle cx="8.5" cy="5.5" r="4" fill="none" stroke="#dcdcdc" stroke-width="1.1"/><path d="M5.7 8.3 L1.5 12.5" stroke="#dcdcdc" stroke-width="1.2"/></svg>
<div class="a" style="left:1893px;top:465px;width:18px;height:18px;background:#282828;border-radius:4px;border:1px solid #222222"></div>
<svg class="a" style="left:1898.5px;top:471.5px;" width="7.0" height="5.0" viewBox="0 0 7.0 5.0"><path d="M1 1.25 L3.5 3.75 L6.0 1.25" fill="none" stroke="#d0d0d0" stroke-width="1.2"/></svg>
<div class="a" style="left:1590px;top:762px;width:26px;height:28px;background:#2b2b2b;border-radius:4px;border-radius:4px 0 0 4px"></div>
<svg class="a" style="left:1595px;top:500px;" width="16" height="16" viewBox="0 0 16 16"><path d="M3 1 V7" stroke="#d0d0d0" stroke-width="1"/><rect x="1" y="8" width="4" height="6" rx="2" fill="#d0d0d0"/><path d="M11 1 V3 Q9 3 9 5 Q9 7 11 7 V14.5 M13 1 V3 Q15 3 15 5 Q15 7 13 7 V14.5" stroke="#d0d0d0" stroke-width="1.3" fill="none"/><path d="M11 7 H13 V14.5 H11 Z" fill="#d0d0d0"/></svg>
<svg class="a" style="left:1595px;top:535px;" width="16" height="16" viewBox="0 0 16 16"><rect x="1" y="4" width="14" height="10" fill="none" stroke="#d0d0d0" stroke-width="1.3"/><rect x="4" y="2" width="5" height="2" fill="#d0d0d0"/><path d="M3.5 7 H10 M3.5 9.5 H10 M3.5 12 H10 M12.5 7 V8 M12.5 10 V11" stroke="#d0d0d0" stroke-width="1"/></svg>
<svg class="a" style="left:1595px;top:564px;" width="16" height="16" viewBox="0 0 16 16"><rect x="1" y="2" width="14" height="4" fill="#d0d0d0"/><path d="M3 6 V14 H13 V6" fill="none" stroke="#d0d0d0" stroke-width="1.3"/><path d="M4 13 L8 8 L12 13 Z" fill="#d0d0d0"/></svg>
<svg class="a" style="left:1595px;top:592px;" width="16" height="16" viewBox="0 0 16 16"><rect x="5" y="1" width="10" height="9" fill="#1d1d1d" stroke="#d0d0d0" stroke-width="1.1"/><path d="M3 3 V12 H13 M1 5 V14 H11" fill="none" stroke="#d0d0d0" stroke-width="1.1"/><path d="M6 9 L9 5 L11 8 L14 6 V9 Z" fill="#d0d0d0"/></svg>
<svg class="a" style="left:1595px;top:620px;" width="16" height="16" viewBox="0 0 16 16"><path d="M1 13 L5 3 L8 13 Z" fill="#d0d0d0"/><circle cx="12.5" cy="4" r="2" fill="#d0d0d0"/><circle cx="10" cy="11" r="3.5" fill="#1d1d1d" stroke="#d0d0d0" stroke-width="1.2"/></svg>
<svg class="a" style="left:1595px;top:649px;" width="16" height="16" viewBox="0 0 16 16"><circle cx="8" cy="8" r="6.2" fill="none" stroke="#c8505a" stroke-width="1.4"/><path d="M4 4 Q7 6 6 9 Q9 9 8 13 M10 2.5 Q9 5 12 6 Q14 6 14 8" fill="none" stroke="#c8505a" stroke-width="1.6"/></svg>
<svg class="a" style="left:1595px;top:684px;" width="16" height="16" viewBox="0 0 16 16"><rect x="4" y="4" width="8" height="8" fill="#e09850"/><path d="M1 4 V1 H4 M12 1 H15 V4 M15 12 V15 H12 M4 15 H1 V12" stroke="#c08040" stroke-width="1" fill="none"/></svg>
<svg class="a" style="left:1595px;top:712px;" width="16" height="16" viewBox="0 0 16 16"><circle cx="7" cy="9" r="5.5" fill="none" stroke="#5a8ad8" stroke-width="1.3"/><circle cx="7" cy="9" r="3" fill="#5a8ad8"/><circle cx="13" cy="3" r="2" fill="#5a8ad8"/></svg>
<svg class="a" style="left:1595px;top:740px;" width="16" height="16" viewBox="0 0 16 16"><path d="M2 12 Q0 9 3 6 L9 1.5 Q13 0 14.5 3 Q15 6 12 8 L6 13.5 Q3 15 2 12 Z" fill="none" stroke="#5a8ad8" stroke-width="1.3"/><circle cx="7" cy="9" r="3" fill="none" stroke="#5a8ad8" stroke-width="1.5"/></svg>
<svg class="a" style="left:1595px;top:768px;" width="16" height="16" viewBox="0 0 16 16"><path d="M2 7 Q1 2 5 2.5 Q7 0.5 10 1.5 Q14 1 14 5 Q14 7 12 7.5 H4 Q2 7.5 2 7 Z" fill="none" stroke="#3fb58f" stroke-width="1.2"/><circle cx="10" cy="4.5" r="1.2" fill="none" stroke="#3fb58f"/><rect x="4" y="9.5" width="8" height="5" fill="none" stroke="#3fb58f" stroke-width="1.2"/><path d="M12 12 L15 9.5 V14.5 Z M1.5 10 V14" stroke="#3fb58f" fill="#3fb58f"/></svg>
<svg class="a" style="left:1595px;top:804px;" width="16" height="16" viewBox="0 0 16 16"><rect x="1" y="1" width="14" height="14" fill="#8a3a44"/><path d="M1 1 H4.5 V4.5 H1 Z M8 1 H11.5 V4.5 H8 Z M4.5 4.5 H8 V8 H4.5 Z M11.5 4.5 H15 V8 H11.5 Z M1 8 H4.5 V11.5 H1 Z M8 8 H11.5 V11.5 H8 Z M4.5 11.5 H8 V15 H4.5 Z M11.5 11.5 H15 V15 H11.5 Z" fill="#d07080"/></svg>
<svg class="a" style="left:1627px;top:498px;" width="14" height="14" viewBox="0 0 14 14"><rect x="3.5" y="3.5" width="7" height="7" fill="#e0e0e0"/><path d="M0.5 3.5 V0.5 H3.5 M10.5 0.5 H13.5 V3.5 M13.5 10.5 V13.5 H10.5 M3.5 13.5 H0.5 V10.5" stroke="#cfcfcf" stroke-width="1" fill="none"/></svg>
<div class="t" style="left:1650px;top:500.0px;font-size:11px;line-height:11px;color:#e6e6e6;">Camera</div>
<svg class="a" style="left:1706px;top:500px;" width="7" height="10" viewBox="0 0 7 10"><path d="M1 1 L5.5 5 L1 9" fill="none" stroke="#d0d0d0" stroke-width="1.1"/></svg>
<svg class="a" style="left:1721px;top:497px;" width="16" height="16" viewBox="0 0 16 16"><path d="M2 7 Q1 2 5 2.5 Q7 0.5 10 1.5 Q14 1 14 5 Q14 7 12 7.5 H4 Q2 7.5 2 7 Z" fill="none" stroke="#e0e0e0" stroke-width="1.1"/><circle cx="10" cy="4.5" r="1.1" fill="none" stroke="#e0e0e0"/><rect x="4" y="9.5" width="8" height="4.5" fill="none" stroke="#e0e0e0" stroke-width="1.1"/><path d="M12 11.7 L15 9.5 V14 Z M1.5 10 V14" stroke="#e0e0e0" fill="#e0e0e0"/></svg>
<div class="t" style="left:1745px;top:500.0px;font-size:11px;line-height:11px;color:#e6e6e6;">Camera.001</div>
<svg class="a" style="left:1895px;top:497px;" width="15" height="16" viewBox="0 0 15 16"><path d="M1 15 L6 10 M4 7 L9 12 M6 5 L10 1 L15 6 L11 10" fill="none" stroke="#a8a8a8" stroke-width="1.1"/></svg>
<div class="a" style="left:1625px;top:531.5px;width:286px;height:19px;background:#1d1d1d;border-radius:4px;border:1px solid #2a2a2a"></div>
<div class="a" style="left:1626px;top:532.5px;width:29.5px;height:17px;background:#282828;border-radius:0px;border-radius:3px 0 0 3px"></div>
<div class="a" style="left:1891px;top:532.5px;width:19px;height:17px;background:#555555;border-radius:0px;border-radius:0 3px 3px 0"></div>
<svg class="a" style="left:1627px;top:533px;" width="16" height="16" viewBox="0 0 16 16"><path d="M2 7 Q1 2 5 2.5 Q7 0.5 10 1.5 Q14 1 14 5 Q14 7 12 7.5 H4 Q2 7.5 2 7 Z" fill="none" stroke="#e0e0e0" stroke-width="1.1"/><circle cx="10" cy="4.5" r="1.1" fill="none" stroke="#e0e0e0"/><rect x="4" y="9.5" width="8" height="4.5" fill="none" stroke="#e0e0e0" stroke-width="1.1"/><path d="M12 11.7 L15 9.5 V14 Z M1.5 10 V14" stroke="#e0e0e0" fill="#e0e0e0"/></svg>
<svg class="a" style="left:1644.5px;top:538.5px;" width="7.0" height="5.0" viewBox="0 0 7.0 5.0"><path d="M1 1.25 L3.5 3.75 L6.0 1.25" fill="none" stroke="#d0d0d0" stroke-width="1.2"/></svg>
<div class="t" style="left:1663px;top:536.0px;font-size:11px;line-height:11px;color:#e6e6e6;">Camera.001</div>
<svg class="a" style="left:1894px;top:533px;" width="14" height="15" viewBox="0 0 14 15"><path d="M7 1 L13 3 V8 Q13 12 7 14 Q1 12 1 8 V3 Z" fill="none" stroke="#a8a8a8" stroke-width="1.1"/></svg>
<div class="a" style="left:1624px;top:561px;width:288px;height:219px;background:#3d3d3d;border-radius:5px;"></div>
<svg class="a" style="left:1633px;top:571px;" width="10" height="6" viewBox="0 0 10 6"><path d="M0.8 0.8 L5 5 L9.2 0.8" fill="none" stroke="#d0d0d0" stroke-width="1.1"/></svg>
<div class="t" style="left:1646px;top:569.0px;font-size:11px;line-height:11px;color:#e6e6e6;">Lens</div>
<svg class="a" style="left:1892px;top:572px;" width="14" height="5" viewBox="0 0 14 5"><rect x="1" y="0" width="1.3" height="1.3" fill="#1d1d1d"/><rect x="1" y="3" width="1.3" height="1.3" fill="#1d1d1d"/><rect x="4" y="0" width="1.3" height="1.3" fill="#1d1d1d"/><rect x="4" y="3" width="1.3" height="1.3" fill="#1d1d1d"/><rect x="7" y="0" width="1.3" height="1.3" fill="#1d1d1d"/><rect x="7" y="3" width="1.3" height="1.3" fill="#1d1d1d"/><rect x="10" y="0" width="1.3" height="1.3" fill="#1d1d1d"/><rect x="10" y="3" width="1.3" height="1.3" fill="#1d1d1d"/></svg>
<div class="t" style="right:192px;top:599.0px;font-size:11px;line-height:11px;color:#e6e6e6;text-align:right;">Type</div>
<div class="a" style="left:1738px;top:595px;width:145px;height:18px;background:#282828;border-radius:0px;border-radius:4px;box-shadow:0 1px 1px #2a2a2a"></div>
<div class="t" style="left:1745px;top:599.0px;font-size:11px;line-height:11px;color:#e6e6e6;">Perspective</div>
<svg class="a" style="left:1872px;top:601.5px;" width="8" height="6" viewBox="0 0 8 6"><path d="M1 1.5 L4 4.5 L7 1.5" fill="none" stroke="#d0d0d0" stroke-width="1.2"/></svg>
<svg class="a" style="left:1892px;top:601.5px;" width="5" height="5" viewBox="0 0 5 5"><circle cx="2.5" cy="2.5" r="2.2" fill="#e6e6e6"/></svg>
<div class="t" style="right:192px;top:632.0px;font-size:11px;line-height:11px;color:#e6e6e6;text-align:right;">Focal Length</div>
<div class="a" style="left:1738px;top:628px;width:145px;height:18px;background:#545454;border-radius:0px;border-radius:4px"></div>
<div class="t" style="left:1610.5px;width:400px;top:632.0px;font-size:11px;line-height:11px;color:#e6e6e6;text-align:center;">30 mm</div>
<svg class="a" style="left:1892px;top:634.5px;" width="5" height="5" viewBox="0 0 5 5"><circle cx="2.5" cy="2.5" r="2.2" fill="#e6e6e6"/></svg>
<div class="t" style="right:192px;top:654.0px;font-size:11px;line-height:11px;color:#e6e6e6;text-align:right;">Lens Unit</div>
<div class="a" style="left:1738px;top:650px;width:145px;height:18px;background:#282828;border-radius:0px;border-radius:4px;box-shadow:0 1px 1px #2a2a2a"></div>
<div class="t" style="left:1745px;top:654.0px;font-size:11px;line-height:11px;color:#e6e6e6;">Millimeters</div>
<svg class="a" style="left:1872px;top:656.5px;" width="8" height="6" viewBox="0 0 8 6"><path d="M1 1.5 L4 4.5 L7 1.5" fill="none" stroke="#d0d0d0" stroke-width="1.2"/></svg>
<svg class="a" style="left:1892px;top:656.5px;" width="5" height="5" viewBox="0 0 5 5"><circle cx="2.5" cy="2.5" r="2.2" fill="#e6e6e6"/></svg>
<div class="t" style="right:192px;top:687.0px;font-size:11px;line-height:11px;color:#e6e6e6;text-align:right;">Shift X</div>
<div class="a" style="left:1738px;top:683px;width:145px;height:18px;background:#545454;border-radius:0px;border-radius:4px 4px 0 0"></div>
<div class="t" style="left:1610.5px;width:400px;top:687.0px;font-size:11px;line-height:11px;color:#e6e6e6;text-align:center;">0.000</div>
<svg class="a" style="left:1892px;top:689.5px;" width="5" height="5" viewBox="0 0 5 5"><circle cx="2.5" cy="2.5" r="2.2" fill="#e6e6e6"/></svg>
<div class="a" style="left:1738px;top:701px;width:145px;height:1px;background:#474747;border-radius:0px;"></div>
<div class="t" style="right:192px;top:706.5px;font-size:11px;line-height:11px;color:#e6e6e6;text-align:right;">Y</div>
<div class="a" style="left:1738px;top:702px;width:145px;height:19px;background:#545454;border-radius:0px;border-radius:0 0 4px 4px"></div>
<div class="t" style="left:1610.5px;width:400px;top:706.5px;font-size:11px;line-height:11px;color:#e6e6e6;text-align:center;">0.000</div>
<svg class="a" style="left:1892px;top:709.0px;" width="5" height="5" viewBox="0 0 5 5"><circle cx="2.5" cy="2.5" r="2.2" fill="#e6e6e6"/></svg>
<div class="t" style="right:192px;top:737.0px;font-size:11px;line-height:11px;color:#e6e6e6;text-align:right;">Clip Start</div>
<div class="a" style="left:1738px;top:733px;width:145px;height:18px;background:#545454;border-radius:0px;border-radius:4px 4px 0 0"></div>
<div class="t" style="left:1610.5px;width:400px;top:737.0px;font-size:11px;line-height:11px;color:#e6e6e6;text-align:center;">0.1 m</div>
<svg class="a" style="left:1892px;top:739.5px;" width="5" height="5" viewBox="0 0 5 5"><circle cx="2.5" cy="2.5" r="2.2" fill="#e6e6e6"/></svg>
<div class="a" style="left:1738px;top:751px;width:145px;height:1px;background:#474747;border-radius:0px;"></div>
<div class="t" style="right:192px;top:756.5px;font-size:11px;line-height:11px;color:#e6e6e6;text-align:right;">End</div>
<div class="a" style="left:1738px;top:752px;width:145px;height:19px;background:#545454;border-radius:0px;border-radius:0 0 4px 4px"></div>
<div class="t" style="left:1610.5px;width:400px;top:756.5px;font-size:11px;line-height:11px;color:#e6e6e6;text-align:center;">1000 m</div>
<svg class="a" style="left:1892px;top:759.0px;" width="5" height="5" viewBox="0 0 5 5"><circle cx="2.5" cy="2.5" r="2.2" fill="#e6e6e6"/></svg>
<div class="a" style="left:1624px;top:782.5px;width:288px;height:24.5px;background:#3d3d3d;border-radius:5px;"></div>
<svg class="a" style="left:1636px;top:789.75px;" width="6" height="10" viewBox="0 0 6 10"><path d="M0.8 0.8 L5 5 L0.8 9.2" fill="none" stroke="#d0d0d0" stroke-width="1.1"/></svg>
<div class="t" style="left:1646px;top:789.75px;font-size:11px;line-height:11px;color:#e6e6e6;">Camera</div>
<svg class="a" style="left:1867px;top:787.75px;" width="16" height="14" viewBox="0 0 16 14"><circle cx="2.5" cy="2.5" r="1.6" fill="#e6e6e6"/><circle cx="2.5" cy="7" r="1.6" fill="#e6e6e6"/><circle cx="2.5" cy="11.5" r="1.6" fill="#e6e6e6"/><path d="M6 2.5 H15 M6 7 H15 M6 11.5 H15" stroke="#e6e6e6" stroke-width="1.1"/></svg>
<svg class="a" style="left:1892px;top:792.75px;" width="14" height="5" viewBox="0 0 14 5"><rect x="1" y="0" width="1.3" height="1.3" fill="#1d1d1d"/><rect x="1" y="3" width="1.3" height="1.3" fill="#1d1d1d"/><rect x="4" y="0" width="1.3" height="1.3" fill="#1d1d1d"/><rect x="4" y="3" width="1.3" height="1.3" fill="#1d1d1d"/><rect x="7" y="0" width="1.3" height="1.3" fill="#1d1d1d"/><rect x="7" y="3" width="1.3" height="1.3" fill="#1d1d1d"/><rect x="10" y="0" width="1.3" height="1.3" fill="#1d1d1d"/><rect x="10" y="3" width="1.3" height="1.3" fill="#1d1d1d"/></svg>
<div class="a" style="left:1624px;top:809.5px;width:288px;height:24.5px;background:#3d3d3d;border-radius:5px;"></div>
<svg class="a" style="left:1636px;top:816.75px;" width="6" height="10" viewBox="0 0 6 10"><path d="M0.8 0.8 L5 5 L0.8 9.2" fill="none" stroke="#d0d0d0" stroke-width="1.1"/></svg>
<div class="a" style="left:1645px;top:816.25px;width:11px;height:11px;background:#545454;border-radius:3px;"></div>
<div class="t" style="left:1660px;top:816.75px;font-size:11px;line-height:11px;color:#e6e6e6;">Safe Areas</div>
<svg class="a" style="left:1867px;top:814.75px;" width="16" height="14" viewBox="0 0 16 14"><circle cx="2.5" cy="2.5" r="1.6" fill="#e6e6e6"/><circle cx="2.5" cy="7" r="1.6" fill="#e6e6e6"/><circle cx="2.5" cy="11.5" r="1.6" fill="#e6e6e6"/><path d="M6 2.5 H15 M6 7 H15 M6 11.5 H15" stroke="#e6e6e6" stroke-width="1.1"/></svg>
<svg class="a" style="left:1892px;top:819.75px;" width="14" height="5" viewBox="0 0 14 5"><rect x="1" y="0" width="1.3" height="1.3" fill="#1d1d1d"/><rect x="1" y="3" width="1.3" height="1.3" fill="#1d1d1d"/><rect x="4" y="0" width="1.3" height="1.3" fill="#1d1d1d"/><rect x="4" y="3" width="1.3" height="1.3" fill="#1d1d1d"/><rect x="7" y="0" width="1.3" height="1.3" fill="#1d1d1d"/><rect x="7" y="3" width="1.3" height="1.3" fill="#1d1d1d"/><rect x="10" y="0" width="1.3" height="1.3" fill="#1d1d1d"/><rect x="10" y="3" width="1.3" height="1.3" fill="#1d1d1d"/></svg>
<div class="a" style="left:1624px;top:837px;width:288px;height:24px;background:#3d3d3d;border-radius:5px;"></div>
<svg class="a" style="left:1636px;top:844.0px;" width="6" height="10" viewBox="0 0 6 10"><path d="M0.8 0.8 L5 5 L0.8 9.2" fill="none" stroke="#d0d0d0" stroke-width="1.1"/></svg>
<div class="a" style="left:1645px;top:843.5px;width:11px;height:11px;background:#545454;border-radius:3px;"></div>
<div class="t" style="left:1660px;top:844.0px;font-size:11px;line-height:11px;color:#e6e6e6;">Background Images</div>
<svg class="a" style="left:1892px;top:847.0px;" width="14" height="5" viewBox="0 0 14 5"><rect x="1" y="0" width="1.3" height="1.3" fill="#1d1d1d"/><rect x="1" y="3" width="1.3" height="1.3" fill="#1d1d1d"/><rect x="4" y="0" width="1.3" height="1.3" fill="#1d1d1d"/><rect x="4" y="3" width="1.3" height="1.3" fill="#1d1d1d"/><rect x="7" y="0" width="1.3" height="1.3" fill="#1d1d1d"/><rect x="7" y="3" width="1.3" height="1.3" fill="#1d1d1d"/><rect x="10" y="0" width="1.3" height="1.3" fill="#1d1d1d"/><rect x="10" y="3" width="1.3" height="1.3" fill="#1d1d1d"/></svg>
<div class="a" style="left:1624px;top:863.5px;width:288px;height:24.5px;background:#3d3d3d;border-radius:5px;"></div>
<svg class="a" style="left:1636px;top:870.75px;" width="6" height="10" viewBox="0 0 6 10"><path d="M0.8 0.8 L5 5 L0.8 9.2" fill="none" stroke="#d0d0d0" stroke-width="1.1"/></svg>
<div class="t" style="left:1646px;top:870.75px;font-size:11px;line-height:11px;color:#e6e6e6;">Viewport Display</div>
<svg class="a" style="left:1892px;top:873.75px;" width="14" height="5" viewBox="0 0 14 5"><rect x="1" y="0" width="1.3" height="1.3" fill="#1d1d1d"/><rect x="1" y="3" width="1.3" height="1.3" fill="#1d1d1d"/><rect x="4" y="0" width="1.3" height="1.3" fill="#1d1d1d"/><rect x="4" y="3" width="1.3" height="1.3" fill="#1d1d1d"/><rect x="7" y="0" width="1.3" height="1.3" fill="#1d1d1d"/><rect x="7" y="3" width="1.3" height="1.3" fill="#1d1d1d"/><rect x="10" y="0" width="1.3" height="1.3" fill="#1d1d1d"/><rect x="10" y="3" width="1.3" height="1.3" fill="#1d1d1d"/></svg>
<div class="a" style="left:1624px;top:890.5px;width:288px;height:120px;background:#3d3d3d;border-radius:5px;"></div>
<svg class="a" style="left:1633px;top:899.5px;" width="10" height="6" viewBox="0 0 10 6"><path d="M0.8 0.8 L5 5 L9.2 0.8" fill="none" stroke="#d0d0d0" stroke-width="1.1"/></svg>
<div class="a" style="left:1645px;top:897.0px;width:11px;height:11px;background:#545454;border-radius:3px;"></div>
<div class="t" style="left:1660px;top:897.5px;font-size:11px;line-height:11px;color:#e6e6e6;">Depth of Field</div>
<svg class="a" style="left:1892px;top:900.5px;" width="14" height="5" viewBox="0 0 14 5"><rect x="1" y="0" width="1.3" height="1.3" fill="#1d1d1d"/><rect x="1" y="3" width="1.3" height="1.3" fill="#1d1d1d"/><rect x="4" y="0" width="1.3" height="1.3" fill="#1d1d1d"/><rect x="4" y="3" width="1.3" height="1.3" fill="#1d1d1d"/><rect x="7" y="0" width="1.3" height="1.3" fill="#1d1d1d"/><rect x="7" y="3" width="1.3" height="1.3" fill="#1d1d1d"/><rect x="10" y="0" width="1.3" height="1.3" fill="#1d1d1d"/><rect x="10" y="3" width="1.3" height="1.3" fill="#1d1d1d"/></svg>
<div class="t" style="right:192px;top:928.0px;font-size:11px;line-height:11px;color:#9a9a9a;text-align:right;">Focus Object</div>
<div class="a" style="left:1738px;top:924px;width:145px;height:18.5px;background:#2b2b2b;border-radius:4px;"></div>
<svg class="a" style="left:1742px;top:926px;" width="14" height="14" viewBox="0 0 14 14"><rect x="3.5" y="3.5" width="7" height="7" fill="#9a9a9a"/><path d="M0.5 3.5 V0.5 H3.5 M10.5 0.5 H13.5 V3.5 M13.5 10.5 V13.5 H10.5 M3.5 13.5 H0.5 V10.5" stroke="#8a8a8a" stroke-width="1" fill="none"/></svg>
<svg class="a" style="left:1865px;top:925px;" width="16" height="16" viewBox="0 0 16 16"><path d="M2 14.5 L3 11 L9 5 L11 7 L5 13 Z" fill="none" stroke="#a0a0a0" stroke-width="1.1"/><path d="M8 4 L12 8 M10 3.5 L12.5 1 Q14 0 15 1 Q16 2 15 3.5 L12.5 6 Z" fill="#a0a0a0" stroke="#a0a0a0"/></svg>
<div class="a" style="left:1738px;top:946.5px;width:145px;height:18px;background:#474747;border-radius:4px;"></div>
<div class="t" style="left:1610.5px;width:400px;top:950.5px;font-size:11px;line-height:11px;color:#8a8a8a;text-align:center;">10 m</div>
<svg class="a" style="left:1892px;top:953px;" width="5" height="5" viewBox="0 0 5 5"><circle cx="2.5" cy="2.5" r="2.2" fill="#6a6a6a"/></svg>
<svg class="a" style="left:1645px;top:982px;" width="10" height="6" viewBox="0 0 10 6"><path d="M0.8 0.8 L5 5 L9.2 0.8" fill="none" stroke="#d0d0d0" stroke-width="1.1"/></svg>
<div class="t" style="left:1660px;top:980.0px;font-size:11px;line-height:11px;color:#e6e6e6;">Aperture</div>
<div class="a" style="left:1588px;top:996px;width:332px;height:21px;background:#1d1d1d;border-radius:0px;"></div>
<div class="a" style="left:1914px;top:497px;width:3px;height:80px;background:#3a3a3a;border-radius:2px;"></div>
<div class="t" style="right:192px;top:950.5px;font-size:11px;line-height:11px;color:#9a9a9a;text-align:right;">Distance</div>
<div class="a" style="left:1px;top:875px;width:1584px;height:22px;background:#1d1d1d;border-radius:0px;"></div>
<div class="a" style="left:1px;top:897px;width:1584px;height:99px;background:#222222;border-radius:0px;border-radius:0 0 6px 6px"></div>
<div class="a" style="left:165.041px;top:897px;width:1255.209px;height:89px;background:#2e2e2e;border-radius:0px;"></div>
<div class="a" style="left:163.541px;top:897px;width:2px;height:99px;background:#080808;border-radius:0px;"></div>
<div class="a" style="left:1419.75px;top:897px;width:1.5px;height:99px;background:#080808;border-radius:0px;"></div>
<svg class="a" style="left:0px;top:897px;" width="1586" height="99" viewBox="0 0 1586 99"><rect x="8.3" y="0" width="1" height="99" fill="#1a1a1a"/><rect x="33.5" y="0" width="1" height="99" fill="#262626"/><rect x="58.7" y="0" width="1" height="99" fill="#1a1a1a"/><rect x="83.9" y="0" width="1" height="99" fill="#262626"/><rect x="109.1" y="0" width="1" height="99" fill="#1a1a1a"/><rect x="134.3" y="0" width="1" height="99" fill="#262626"/><rect x="159.5" y="0" width="1" height="99" fill="#1a1a1a"/><rect x="184.7" y="0" width="1" height="99" fill="#262626"/><rect x="209.9" y="0" width="1" height="99" fill="#1a1a1a"/><rect x="235.1" y="0" width="1" height="99" fill="#262626"/><rect x="260.3" y="0" width="1" height="99" fill="#1a1a1a"/><rect x="285.5" y="0" width="1" height="99" fill="#262626"/><rect x="310.7" y="0" width="1" height="99" fill="#1a1a1a"/><rect x="335.9" y="0" width="1" height="99" fill="#262626"/><rect x="361.1" y="0" width="1" height="99" fill="#1a1a1a"/><rect x="386.3" y="0" width="1" height="99" fill="#262626"/><rect x="411.6" y="0" width="1" height="99" fill="#1a1a1a"/><rect x="436.8" y="0" width="1" height="99" fill="#262626"/><rect x="462.0" y="0" width="1" height="99" fill="#1a1a1a"/><rect x="487.2" y="0" width="1" height="99" fill="#262626"/><rect x="512.4" y="0" width="1" height="99" fill="#1a1a1a"/><rect x="537.6" y="0" width="1" height="99" fill="#262626"/><rect x="562.8" y="0" width="1" height="99" fill="#1a1a1a"/><rect x="588.0" y="0" width="1" height="99" fill="#262626"/><rect x="613.2" y="0" width="1" height="99" fill="#1a1a1a"/><rect x="638.4" y="0" width="1" height="99" fill="#262626"/><rect x="663.6" y="0" width="1" height="99" fill="#1a1a1a"/><rect x="688.8" y="0" width="1" height="99" fill="#262626"/><rect x="714.0" y="0" width="1" height="99" fill="#1a1a1a"/><rect x="739.2" y="0" width="1" height="99" fill="#262626"/><rect x="764.4" y="0" width="1" height="99" fill="#1a1a1a"/><rect x="789.6" y="0" width="1" height="99" fill="#262626"/><rect x="814.8" y="0" width="1" height="99" fill="#1a1a1a"/><rect x="840.0" y="0" width="1" height="99" fill="#262626"/><rect x="865.2" y="0" width="1" height="99" fill="#1a1a1a"/><rect x="890.4" y="0" width="1" height="99" fill="#262626"/><rect x="915.7" y="0" width="1" height="99" fill="#1a1a1a"/><rect x="940.9" y="0" width="1" height="99" fill="#262626"/><rect x="966.1" y="0" width="1" height="99" fill="#1a1a1a"/><rect x="991.3" y="0" width="1" height="99" fill="#262626"/><rect x="1016.5" y="0" width="1" height="99" fill="#1a1a1a"/><rect x="1041.7" y="0" width="1" height="99" fill="#262626"/><rect x="1066.9" y="0" width="1" height="99" fill="#1a1a1a"/><rect x="1092.1" y="0" width="1" height="99" fill="#262626"/><rect x="1117.3" y="0" width="1" height="99" fill="#1a1a1a"/><rect x="1142.5" y="0" width="1" height="99" fill="#262626"/><rect x="1167.7" y="0" width="1" height="99" fill="#1a1a1a"/><rect x="1192.9" y="0" width="1" height="99" fill="#262626"/><rect x="1218.1" y="0" width="1" height="99" fill="#1a1a1a"/><rect x="1243.3" y="0" width="1" height="99" fill="#262626"/><rect x="1268.5" y="0" width="1" height="99" fill="#1a1a1a"/><rect x="1293.7" y="0" width="1" height="99" fill="#262626"/><rect x="1318.9" y="0" width="1" height="99" fill="#1a1a1a"/><rect x="1344.1" y="0" width="1" height="99" fill="#262626"/><rect x="1369.3" y="0" width="1" height="99" fill="#1a1a1a"/><rect x="1394.5" y="0" width="1" height="99" fill="#262626"/><rect x="1419.8" y="0" width="1" height="99" fill="#1a1a1a"/><rect x="1445.0" y="0" width="1" height="99" fill="#262626"/><rect x="1470.2" y="0" width="1" height="99" fill="#1a1a1a"/><rect x="1495.4" y="0" width="1" height="99" fill="#262626"/><rect x="1520.6" y="0" width="1" height="99" fill="#1a1a1a"/><rect x="1545.8" y="0" width="1" height="99" fill="#262626"/><rect x="1571.0" y="0" width="1" height="99" fill="#1a1a1a"/></svg>
<div class="a" style="left:10px;top:986px;width:1566px;height:8px;background:#555555;border-radius:4px;"></div>
<svg class="a" style="left:11px;top:987px;" width="7" height="7" viewBox="0 0 7 7"><circle cx="3.5" cy="3.5" r="2.8" fill="#2a2a2a"/></svg>
<svg class="a" style="left:1567px;top:987px;" width="7" height="7" viewBox="0 0 7 7"><circle cx="3.5" cy="3.5" r="2.8" fill="#2a2a2a"/></svg>
<div class="t" style="left:-191.23000000000002px;width:400px;top:882.0px;font-size:11px;line-height:11px;color:#b8b8b8;text-align:center;">-30</div>
<div class="t" style="left:-140.82px;width:400px;top:882.0px;font-size:11px;line-height:11px;color:#b8b8b8;text-align:center;">-20</div>
<div class="t" style="left:-90.41px;width:400px;top:882.0px;font-size:11px;line-height:11px;color:#b8b8b8;text-align:center;">-10</div>
<div class="t" style="left:10.409999999999997px;width:400px;top:882.0px;font-size:11px;line-height:11px;color:#b8b8b8;text-align:center;">10</div>
<div class="t" style="left:60.81999999999999px;width:400px;top:882.0px;font-size:11px;line-height:11px;color:#b8b8b8;text-align:center;">20</div>
<div class="t" style="left:111.23000000000002px;width:400px;top:882.0px;font-size:11px;line-height:11px;color:#b8b8b8;text-align:center;">30</div>
<div class="t" style="left:161.64px;width:400px;top:882.0px;font-size:11px;line-height:11px;color:#b8b8b8;text-align:center;">40</div>
<div class="t" style="left:212.05px;width:400px;top:882.0px;font-size:11px;line-height:11px;color:#b8b8b8;text-align:center;">50</div>
<div class="t" style="left:262.46000000000004px;width:400px;top:882.0px;font-size:11px;line-height:11px;color:#b8b8b8;text-align:center;">60</div>
<div class="t" style="left:312.87px;width:400px;top:882.0px;font-size:11px;line-height:11px;color:#b8b8b8;text-align:center;">70</div>
<div class="t" style="left:363.28px;width:400px;top:882.0px;font-size:11px;line-height:11px;color:#b8b8b8;text-align:center;">80</div>
<div class="t" style="left:413.69000000000005px;width:400px;top:882.0px;font-size:11px;line-height:11px;color:#b8b8b8;text-align:center;">90</div>
<div class="t" style="left:464.1px;width:400px;top:882.0px;font-size:11px;line-height:11px;color:#b8b8b8;text-align:center;">100</div>
<div class="t" style="left:514.51px;width:400px;top:882.0px;font-size:11px;line-height:11px;color:#b8b8b8;text-align:center;">110</div>
<div class="t" style="left:564.9200000000001px;width:400px;top:882.0px;font-size:11px;line-height:11px;color:#b8b8b8;text-align:center;">120</div>
<div class="t" style="left:615.33px;width:400px;top:882.0px;font-size:11px;line-height:11px;color:#b8b8b8;text-align:center;">130</div>
<div class="t" style="left:665.74px;width:400px;top:882.0px;font-size:11px;line-height:11px;color:#b8b8b8;text-align:center;">140</div>
<div class="t" style="left:716.1500000000001px;width:400px;top:882.0px;font-size:11px;line-height:11px;color:#b8b8b8;text-align:center;">150</div>
<div class="t" style="left:766.5600000000001px;width:400px;top:882.0px;font-size:11px;line-height:11px;color:#b8b8b8;text-align:center;">160</div>
<div class="t" style="left:816.97px;width:400px;top:882.0px;font-size:11px;line-height:11px;color:#b8b8b8;text-align:center;">170</div>
<div class="t" style="left:867.3800000000001px;width:400px;top:882.0px;font-size:11px;line-height:11px;color:#b8b8b8;text-align:center;">180</div>
<div class="t" style="left:917.79px;width:400px;top:882.0px;font-size:11px;line-height:11px;color:#b8b8b8;text-align:center;">190</div>
<div class="t" style="left:968.2px;width:400px;top:882.0px;font-size:11px;line-height:11px;color:#b8b8b8;text-align:center;">200</div>
<div class="t" style="left:1018.6100000000001px;width:400px;top:882.0px;font-size:11px;line-height:11px;color:#b8b8b8;text-align:center;">210</div>
<div class="t" style="left:1069.02px;width:400px;top:882.0px;font-size:11px;line-height:11px;color:#b8b8b8;text-align:center;">220</div>
<div class="t" style="left:1119.43px;width:400px;top:882.0px;font-size:11px;line-height:11px;color:#b8b8b8;text-align:center;">230</div>
<div class="t" style="left:1169.8400000000001px;width:400px;top:882.0px;font-size:11px;line-height:11px;color:#b8b8b8;text-align:center;">240</div>
<div class="t" style="left:1220.25px;width:400px;top:882.0px;font-size:11px;line-height:11px;color:#b8b8b8;text-align:center;">250</div>
<div class="t" style="left:1270.66px;width:400px;top:882.0px;font-size:11px;line-height:11px;color:#b8b8b8;text-align:center;">260</div>
<div class="t" style="left:1321.0700000000002px;width:400px;top:882.0px;font-size:11px;line-height:11px;color:#b8b8b8;text-align:center;">270</div>
<div class="t" style="left:1371.48px;width:400px;top:882.0px;font-size:11px;line-height:11px;color:#b8b8b8;text-align:center;">280</div>
<div class="a" style="left:159px;top:895px;width:2px;height:101px;background:#6382bb;border-radius:0px;"></div>
<div class="a" style="left:148px;top:878px;width:23.5px;height:17px;background:#4772b3;border-radius:4px;"></div>
<div class="t" style="left:-40px;width:400px;top:882.0px;font-size:11px;line-height:11px;color:#ffffff;text-align:center;">0</div>
<svg class="a" style="left:3px;top:898px;" width="6" height="8" viewBox="0 0 6 8"><path d="M1 1 L5 4 L1 7" fill="none" stroke="#8a8a8a" stroke-width="1"/></svg>
<svg class="a" style="left:1578px;top:897px;" width="6" height="10" viewBox="0 0 6 10"><path d="M5 1 L1 5 L5 9" fill="none" stroke="#8a8a8a" stroke-width="1"/></svg>
<div class="a" style="left:1580px;top:905px;width:3px;height:80px;background:#333333;border-radius:2px;"></div>
<div class="a" style="left:9px;top:854px;width:30px;height:18px;background:#282828;border-radius:4px;border:1px solid #222222"></div>
<svg class="a" style="left:13px;top:855px;" width="22" height="16" viewBox="0 0 22 16"><circle cx="7.5" cy="8" r="6.5" fill="#e6e6e6"/><path d="M9 4.5 L6 8 L9 11.5" fill="none" stroke="#303030" stroke-width="1.5"/></svg>
<svg class="a" style="left:29.5px;top:860.5px;" width="7.0" height="5.0" viewBox="0 0 7.0 5.0"><path d="M1 1.25 L3.5 3.75 L6.0 1.25" fill="none" stroke="#d0d0d0" stroke-width="1.2"/></svg>
<div class="a" style="left:45.5px;top:854px;width:128px;height:18px;background:#282828;border-radius:4px;border:1px solid #222222"></div>
<div class="a" style="left:114px;top:855px;width:1px;height:16px;background:#222;border-radius:0px;"></div>
<div class="t" style="left:53px;top:858.0px;font-size:11px;line-height:11px;color:#e6e6e6;">Playback</div>
<svg class="a" style="left:104.5px;top:861.0px;" width="7.0" height="5.0" viewBox="0 0 7.0 5.0"><path d="M1 1.25 L3.5 3.75 L6.0 1.25" fill="none" stroke="#d0d0d0" stroke-width="1.2"/></svg>
<div class="t" style="left:122px;top:858.0px;font-size:11px;line-height:11px;color:#e6e6e6;">Keying</div>
<svg class="a" style="left:163.5px;top:861.0px;" width="7.0" height="5.0" viewBox="0 0 7.0 5.0"><path d="M1 1.25 L3.5 3.75 L6.0 1.25" fill="none" stroke="#d0d0d0" stroke-width="1.2"/></svg>
<div class="t" style="left:183px;top:858.0px;font-size:11px;line-height:11px;color:#e6e6e6;">View</div>
<div class="t" style="left:223px;top:858.0px;font-size:11px;line-height:11px;color:#e6e6e6;">Marker</div>
<div class="a" style="left:700px;top:854px;width:39px;height:18px;background:#282828;border-radius:4px;border:1px solid #222222"></div>
<div class="a" style="left:701px;top:855px;width:19px;height:16px;background:#545454;border-radius:0px;border-radius:3px 0 0 3px"></div>
<svg class="a" style="left:704px;top:857px;" width="12" height="12" viewBox="0 0 12 12"><circle cx="6" cy="6" r="4" fill="#e6e6e6"/></svg>
<svg class="a" style="left:726.0px;top:861.0px;" width="7.0" height="5.0" viewBox="0 0 7.0 5.0"><path d="M1 1.25 L3.5 3.75 L6.0 1.25" fill="none" stroke="#6a6a6a" stroke-width="1.2"/></svg>
<div class="a" style="left:745.5px;top:854px;width:119px;height:18px;background:#545454;border-radius:4px;border:1px solid #3a3a3a"></div>
<svg class="a" style="left:747px;top:856px;" width="16" height="14" viewBox="0 0 16 14"><path d="M3 2 V12" stroke="#e6e6e6" stroke-width="1.8"/><path d="M13 2 L5 7 L13 12 Z" fill="#e6e6e6"/></svg>
<svg class="a" style="left:767px;top:856px;" width="16" height="14" viewBox="0 0 16 14"><path d="M4.5 3 L8 7 L4.5 11 L1 7 Z" fill="#e6e6e6"/><path d="M15 2.5 L9 7 L15 11.5 Z" fill="#e6e6e6"/></svg>
<svg class="a" style="left:787px;top:856px;" width="16" height="14" viewBox="0 0 16 14"><path d="M12 2 L4 7 L12 12 Z" fill="#e6e6e6"/></svg>
<svg class="a" style="left:807px;top:856px;" width="16" height="14" viewBox="0 0 16 14"><path d="M4 2 L12 7 L4 12 Z" fill="#e6e6e6"/></svg>
<svg class="a" style="left:827px;top:856px;" width="16" height="14" viewBox="0 0 16 14"><path d="M1 2.5 L7 7 L1 11.5 Z" fill="#e6e6e6"/><path d="M11.5 3 L15 7 L11.5 11 L8 7 Z" fill="#e6e6e6"/></svg>
<svg class="a" style="left:847px;top:856px;" width="16" height="14" viewBox="0 0 16 14"><path d="M3 2 L11 7 L3 12 Z" fill="#e6e6e6"/><path d="M13 2 V12" stroke="#e6e6e6" stroke-width="1.8"/></svg>
<div class="a" style="left:766px;top:855px;width:1px;height:16px;background:#4a4a4a;border-radius:0px;"></div>
<div class="a" style="left:786px;top:855px;width:1px;height:16px;background:#4a4a4a;border-radius:0px;"></div>
<div class="a" style="left:806px;top:855px;width:1px;height:16px;background:#4a4a4a;border-radius:0px;"></div>
<div class="a" style="left:826px;top:855px;width:1px;height:16px;background:#4a4a4a;border-radius:0px;"></div>
<div class="a" style="left:846px;top:855px;width:1px;height:16px;background:#4a4a4a;border-radius:0px;"></div>
<div class="a" style="left:1308px;top:853.5px;width:73px;height:18.5px;background:#545454;border-radius:4px;"></div>
<div class="t" style="left:1144.5px;width:400px;top:858.0px;font-size:11px;line-height:11px;color:#e6e6e6;text-align:center;">0</div>
<div class="a" style="left:1387.5px;top:853.5px;width:190.5px;height:18.5px;background:#545454;border-radius:4px;border:1px solid #3a3a3a"></div>
<div class="a" style="left:1388.5px;top:854.5px;width:18px;height:16.5px;background:#3d3d3d;border-radius:0px;border-radius:3px 0 0 3px"></div>
<svg class="a" style="left:1390px;top:855px;" width="16" height="16" viewBox="0 0 16 16"><circle cx="7.5" cy="9" r="5.5" fill="none" stroke="#d8d8d8" stroke-width="1.2"/><path d="M7.5 5.5 V9 H10 M5.5 1.5 H9.5 M7.5 1.5 V3.5 M12 3 L13.5 4.5" fill="none" stroke="#d8d8d8" stroke-width="1.1"/></svg>
<div class="a" style="left:1494px;top:854.5px;width:1px;height:16.5px;background:#474747;border-radius:0px;"></div>
<div class="t" style="left:1422px;top:858.0px;font-size:11px;line-height:11px;color:#e6e6e6;">Start</div>
<div class="t" style="right:439.5px;top:858.0px;font-size:11px;line-height:11px;color:#e6e6e6;text-align:right;">1</div>
<div class="t" style="left:1510px;top:858.0px;font-size:11px;line-height:11px;color:#e6e6e6;">End</div>
<div class="t" style="right:355px;top:858.0px;font-size:11px;line-height:11px;color:#e6e6e6;text-align:right;">250</div>
<svg class="a" style="left:12px;top:999px;" width="11" height="15" viewBox="0 0 11 15"><rect x="0.8" y="0.8" width="8.6" height="13" rx="3.5" fill="none" stroke="#b0b0b0" stroke-width="1.1"/><path d="M1 5.5 V3 Q1 0.8 3.5 0.8 H5 V5.5 Z" fill="#b0b0b0"/></svg>
<div class="t" style="left:34px;top:1002.0px;font-size:11px;line-height:11px;color:#b8b8b8;">Select</div>
<svg class="a" style="left:223px;top:999px;" width="11" height="15" viewBox="0 0 11 15"><rect x="0.8" y="0.8" width="8.6" height="13" rx="3.5" fill="none" stroke="#b0b0b0" stroke-width="1.1"/><rect x="4" y="2.5" width="2.2" height="3.5" rx="1" fill="#b0b0b0"/></svg>
<div class="t" style="left:245px;top:1002.0px;font-size:11px;line-height:11px;color:#b8b8b8;">Rotate View</div>
<svg class="a" style="left:434px;top:999px;" width="11" height="15" viewBox="0 0 11 15"><rect x="0.8" y="0.8" width="8.6" height="13" rx="3.5" fill="none" stroke="#b0b0b0" stroke-width="1.1"/><path d="M9.2 5.5 V3 Q9.2 0.8 6.7 0.8 H5.2 V5.5 Z" fill="#b0b0b0"/></svg>
<div class="t" style="left:456px;top:1002.0px;font-size:11px;line-height:11px;color:#b8b8b8;">Object Context Menu</div>
<div class="t" style="right:9px;top:1002.0px;font-size:11px;line-height:11px;color:#9a9a9a;text-align:right;">3.3.0</div>
</body></html>
